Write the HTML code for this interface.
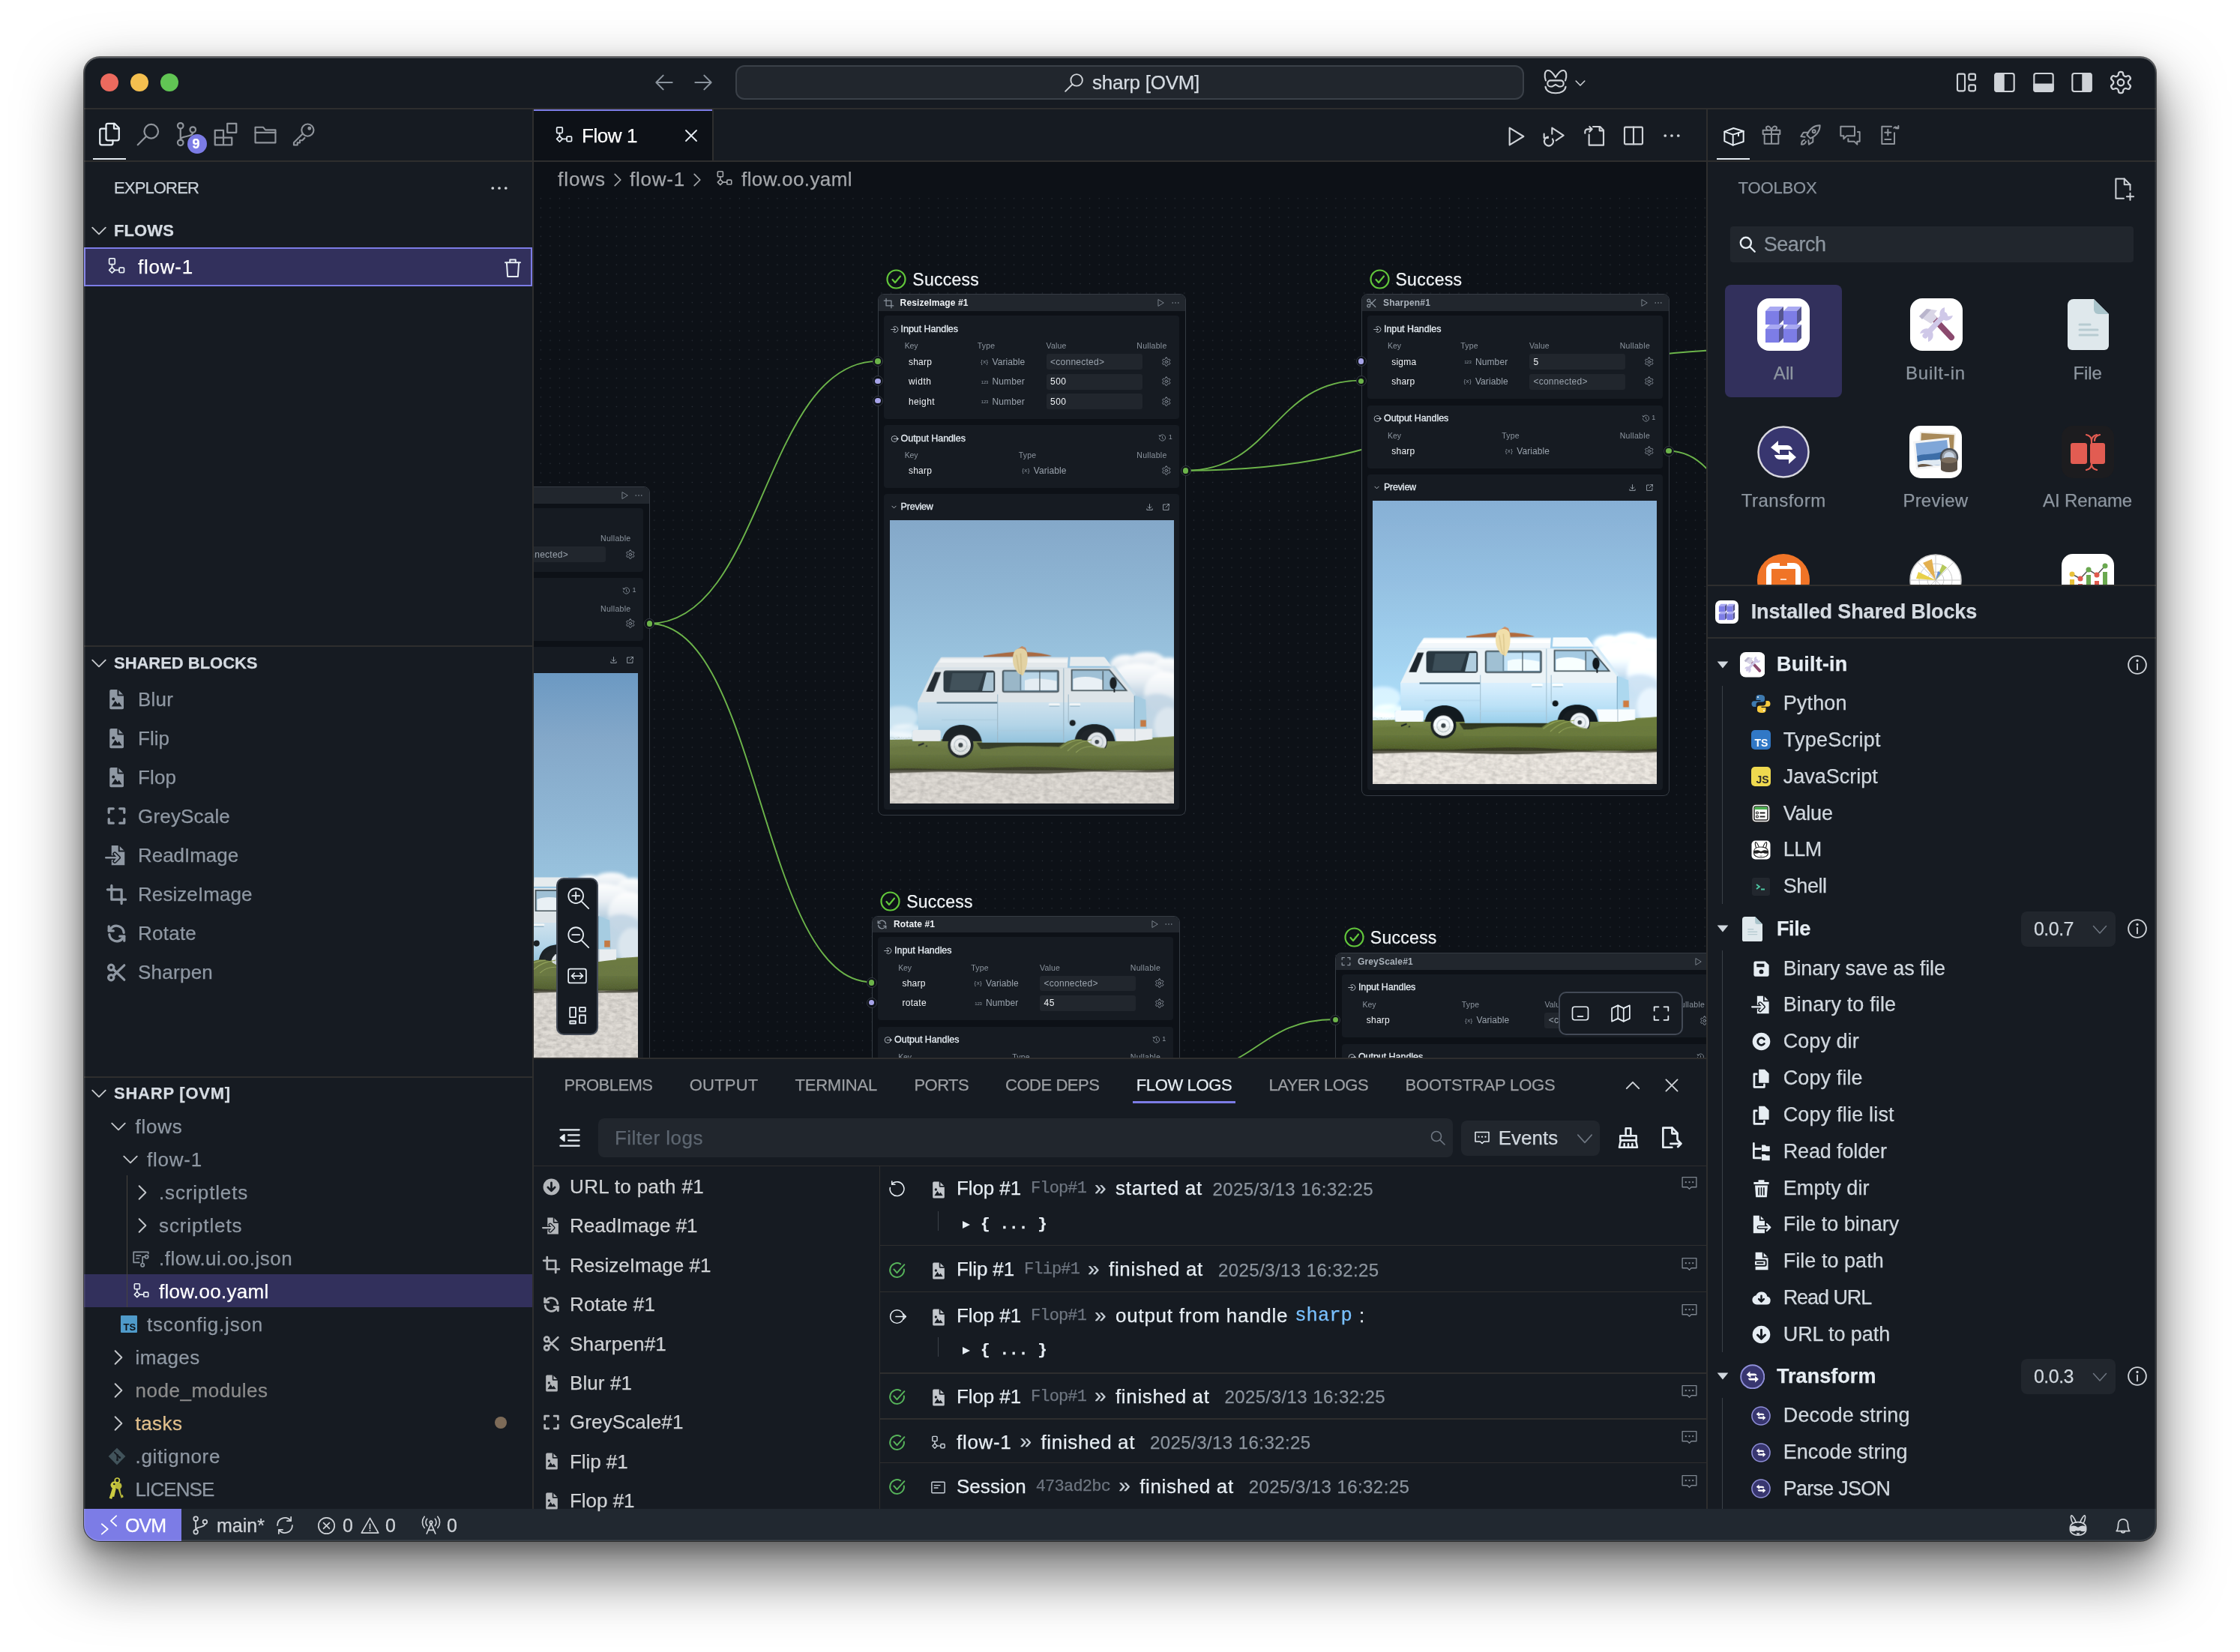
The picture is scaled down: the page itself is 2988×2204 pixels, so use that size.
<!DOCTYPE html>
<html><head><meta charset="utf-8"><title>sharp [OVM]</title>
<style>
html,body{margin:0;padding:0;background:#fff;}
body{width:2988px;height:2204px;position:relative;overflow:hidden;font-family:"Liberation Sans",sans-serif;}
div,svg{position:absolute;}
.t{white-space:nowrap;}
#win{left:112px;top:76px;width:2764px;height:1980px;border-radius:21px;background:#161b22;
box-shadow:0 0 0 1px rgba(0,0,0,.6),0 40px 80px 6px rgba(0,0,0,.54),0 10px 24px rgba(0,0,0,.25);}
#clip{left:112px;top:76px;width:2764px;height:1980px;border-radius:21px;overflow:hidden;}
#pg{left:-112px;top:-76px;width:2988px;height:2204px;will-change:transform;}
.t{-webkit-font-smoothing:antialiased;-webkit-text-stroke:0.25px currentColor;}
#rim{left:112px;top:76px;width:2764px;height:1980px;border-radius:21px;box-shadow:inset 0 0 0 1.5px rgba(255,255,255,.13),inset 0 1.5px 0 0 rgba(255,255,255,.22);pointer-events:none;}
</style></head><body>
<div id="win"></div>
<div id="clip"><div id="pg">

<div id="cv" style="left:712px;top:264px;width:1564px;height:1147px;overflow:hidden;background-color:#0d1117;background-image:radial-gradient(circle,#2d333b 0.55px,transparent 1.05px);background-size:12.64px 12.64px;background-position:-9.6px -5.5px">
<div style="left:-712px;top:-264px;width:2988px;height:2204px">
<svg style="left:0;top:0;width:0;height:0" width="0" height="0">
<symbol id="van" viewBox="0 -100 400 600" preserveAspectRatio="none">
<defs>
<linearGradient id="sky" x1="0" y1="0" x2="0" y2="1"><stop offset="0" stop-color="#6a98c2"/><stop offset=".238" stop-color="#84a8c9"/><stop offset=".5" stop-color="#8fb6d4"/><stop offset=".72" stop-color="#9ac4df"/><stop offset="1" stop-color="#aad5ec"/></linearGradient>
<linearGradient id="low" x1="0" y1="0" x2="0" y2="1"><stop offset="0" stop-color="#cfe2ee"/><stop offset=".55" stop-color="#b4d5e8"/><stop offset="1" stop-color="#93c3dd"/></linearGradient>
<linearGradient id="grs" x1="0" y1="0" x2="0" y2="1"><stop offset="0" stop-color="#7c8a50"/><stop offset=".5" stop-color="#69783f"/><stop offset=".85" stop-color="#55622f"/><stop offset="1" stop-color="#2f3520"/></linearGradient>
<linearGradient id="cld" x1="0" y1="0" x2="0" y2="1"><stop offset="0" stop-color="#ffffff"/><stop offset=".5" stop-color="#e9eff4"/><stop offset="1" stop-color="#b9cfdf"/></linearGradient>
<filter id="nz" x="0" y="0" width="100%" height="100%"><feTurbulence type="fractalNoise" baseFrequency=".12 .2" numOctaves="3" seed="3"/><feColorMatrix values="0 0 0 0 0  0 0 0 0 0  0 0 0 0 0  .9 .9 .9 0 -1.05"/></filter>
<filter id="nz2" x="0" y="0" width="100%" height="100%"><feTurbulence type="fractalNoise" baseFrequency=".5 .9" numOctaves="2" seed="8"/><feColorMatrix values="0 0 0 0 .12  0 0 0 0 .15  0 0 0 0 .08  .9 .9 .9 0 -1.1"/></filter>
<filter id="bl"><feGaussianBlur stdDeviation="2.2"/></filter>
</defs>
<rect x="0" y="-100" width="400" height="420" fill="url(#sky)"/>
<g filter="url(#bl)">
<g fill="url(#cld)">
<ellipse cx="332" cy="204" rx="22" ry="14"/><ellipse cx="362" cy="200" rx="26" ry="14"/><ellipse cx="392" cy="212" rx="24" ry="18"/>
<ellipse cx="350" cy="226" rx="42" ry="24"/><ellipse cx="388" cy="244" rx="30" ry="30"/>
</g>
<g fill="#c3d6e4"><ellipse cx="376" cy="275" rx="34" ry="30" opacity=".9"/><ellipse cx="360" cy="300" rx="50" ry="16" opacity=".8"/><ellipse cx="392" cy="290" rx="20" ry="26" fill="#dbe6ee"/></g>
<g fill="#fff"><ellipse cx="14" cy="278" rx="26" ry="16" opacity=".45"/><ellipse cx="24" cy="298" rx="28" ry="10" opacity=".6"/><ellipse cx="6" cy="306" rx="30" ry="8" opacity=".55"/></g>
</g>
<path d="M0 310c60-2 120 0 200 1s150-2 200-6v52H0z" fill="url(#grs)"/>
<rect x="0" y="306" width="400" height="48" filter="url(#nz2)" opacity=".35"/>
<rect x="0" y="353" width="400" height="150" fill="#e0dcd6"/>
<path d="M0 351c40-3 70 3 120 0s90-4 150 0 90 3 130-1v5c-50 3-90-2-140 1s-90 2-140 0-80 0-120 1z" fill="#3a3a2a" opacity=".8"/>
<rect x="0" y="356" width="400" height="150" filter="url(#nz)" opacity=".16"/>
<!-- van -->
<path d="M62 208.500l9-13.500c.700-1.200 1.500-1.500 3-1.500h177l-1 15z" fill="#e3e8eb"/>
<path d="M72 196h178l-.500 5H69z" fill="#f0f3f5"/>
<path d="M253 206l1-13h46c1.500 0 2.500.500 3.200 1.500l8.500 11.500z" fill="#e6ebee"/>
<path d="M62.300 208.500H314l30 39 .300 10H39z" fill="#dde4e8"/>
<path d="M39 257h305.300v38l25 1v16h-52c-3-16-12-26-29-26s-27 10-29.500 28.500H130c-3-17-13-27-29-27s-27 10-29 24.500H31.600v-15l8.400-1.500z" fill="url(#low)"/>
<path d="M344.300 247.500l15.800 6 2 41.500h-17.800z" fill="#a6cce1"/><path d="M312 206l4.500-.500 30 40-2.200 2.200z" fill="#c9dde9"/>
<path d="M344.300 248v47" stroke="#7fa5bb" stroke-width="1.200"/>
<rect x="31.600" y="296" width="40" height="16" rx="3.500" fill="#e6ebee"/>
<path d="M315.500 294.500h54v14a3.500 3.500 0 0 1-3.500 3.500h-47z" fill="#e9edf0"/>
<path d="M345 294.500v17.500" stroke="#9fb1bb" stroke-width="1"/>
<path d="M63.500 214.500h8.500l-10.500 27.500h-10.500z" fill="#252d33"/>
<rect x="75.500" y="212.300" width="72.500" height="30.700" rx="4" fill="#2f3c44"/><path d="M88 216h44l-8 24H84z" fill="#42525b"/><path d="M136 215h10v26h-16z" fill="#a9c3d2"/>
<rect x="159" y="212.300" width="78.300" height="30" rx="2" fill="#6f8b9c"/><path d="M161 214h22v26.500h-22z" fill="#9ab7c8"/><path d="M185 215h50v25h-50z" fill="#b9d6e8"/><path d="M190 226c10-4 26-3 45 1v13h-45z" fill="#e4edf3"/>
<rect x="159" y="212.300" width="78.300" height="30" rx="2" fill="none" stroke="#46545b" stroke-width="1.800"/><path d="M211 213v28" stroke="#46545b" stroke-width="1.200"/>
<path d="M256 211.400h53l24 29h-77z" fill="#9fc0d5"/><path d="M258 224c12-5 30-3 42 2v14h-42z" fill="#e9f0f5"/><path d="M256 211.400h53l24 29h-77z" fill="none" stroke="#46545b" stroke-width="1.800"/>
<path d="M300 213v26" stroke="#46545b" stroke-width="1.400"/>
<ellipse cx="314.500" cy="230" rx="5" ry="8.500" fill="#1b2125"/><path d="M316 238v5" stroke="#1b2125" stroke-width="2"/>
<path d="M66 257.600h86" stroke="#4f7184" stroke-width="2.200"/>
<path d="M151.700 246v68M244.700 209v105M251.300 246v40" stroke="#9db7c6" stroke-width="1.100" fill="none"/>
<path d="M73 282h78M151 297h93" stroke="#a9c9dc" stroke-width="1" fill="none"/>
<circle cx="257.200" cy="286.200" r="4.300" fill="#1b2125"/>
<rect x="352.700" y="282.200" width="8" height="9.300" fill="#c47a45"/>
<path d="M225 260h13M254 260h13" stroke="#f4f7f8" stroke-width="3" stroke-linecap="round"/><path d="M225 262.500h13M254 262.500h13" stroke="#8fb0c4" stroke-width="1.200" stroke-linecap="round"/>
<path d="M73.500 312c2-14 12-23 27.500-23s26 9 28.500 23z" fill="#1c2327"/>
<path d="M260 312c2-15 11-24 28-24s26.500 9 29 24z" fill="#1c2327"/>
<circle cx="99.600" cy="317.500" r="18" fill="#20262a"/><circle cx="99.600" cy="317.500" r="14.300" fill="#e8ecee"/><circle cx="99.600" cy="317.500" r="9" fill="none" stroke="#c3ccd1" stroke-width="1.500"/><circle cx="99.600" cy="317.500" r="3.200" fill="#3e474c"/>
<ellipse cx="286" cy="313" rx="20" ry="19" fill="#20262a"/><circle cx="291.500" cy="313" r="13.500" fill="#dfe4e7"/><circle cx="291.500" cy="313" r="8.500" fill="none" stroke="#bac4ca" stroke-width="1.500"/><circle cx="291.500" cy="313" r="3" fill="#3e474c"/>
<path d="M48 315l-8 3M52 318l-3 8" stroke="#20262a" stroke-width="2"/><path d="M122 314h146l-6 9H128z" fill="#2b3122" opacity=".85"/>
<path d="M0 322c30-5 50-3 78 1l4 8H0zM128 326c30-9 60-7 110-6 12-10 24-14 40-8 8 6 16 10 30 10 30-12 60-12 92-16v26H128z" fill="#6c7a42"/>
<path d="M240 322c10-8 20-12 30-12M250 326c12-12 22-14 34-16M262 328c10-10 22-10 36-6" stroke="#93a35c" stroke-width="1.200" fill="none"/>
<rect x="0" y="318" width="400" height="34" filter="url(#nz2)" opacity=".3"/>
<path d="M132 191.500c18-3 36-5 46-6l22 1c12 1 22 3 28 5.500l-30 .500-66 .500z" fill="#a96a42"/><path d="M178 183l8-5 5 2 2 6-8 2z" fill="#c48a62"/>
<path d="M176 184c5-5 15-4 17 3 2 11 0 22-6 33-2-3-5-2-7-5-5-6-7-12-7-19 0-5 1-9 3-12z" fill="#e2d2a3"/><path d="M178 190c2 8 2 18 5 26M184 188c1 9 1 20 1 30" stroke="#c9b57e" stroke-width="1" fill="none"/>
</symbol></svg>
<svg style="left:0;top:0" width="2988" height="2204" viewBox="0 0 2988 2204" fill="none" stroke="#6cb44a" stroke-width="1.900"><path d="M866 832C1018.5 832 1018.5 481.9 1171 481.9"/><path d="M866 832C1014.5 832 1014.5 1310.3 1163 1310.3"/><path d="M1581.5 627.8C1698.5 627.8 1698.5 507.6 1815.5 507.6"/><path d="M1581.5 627.8C1960.8 627.8 1960.8 466 2340 466"/><path d="M2226 601.7C2313.0 601.7 2313.0 760 2400 760"/><path d="M1574 1430.5C1677.7 1430.5 1677.7 1360 1781.4 1360"/></svg>
<div style="left:455.9px;top:649.2px;width:411px;height:825.2000000000003px;background:#0d1117;border:1px solid #353b43;border-radius:8px;box-sizing:border-box;"></div>
<div style="left:456.9px;top:650.2px;width:409px;height:21.5px;background:#21262d;border-radius:7px 7px 0 0;"></div>
<div class="t" style="top:653.0px;height:16px;line-height:16px;font-size:12px;color:#f0f3f6;letter-spacing:-0.06px;left:485.4px;font-weight:700;-webkit-text-stroke:0;">ReadImage #1</div>
<svg style="left:826.9px;top:655.0px;color:#8b949e;" width="12" height="12" viewBox="0 0 24 24" fill="none" stroke="#8b949e" stroke-width="1.6" stroke-linecap="round" stroke-linejoin="round"><path d="M6.500 3.500l14 8.500-14 8.500z"/></svg>
<svg style="left:846.4px;top:655.0px;color:#8b949e;" width="12" height="12" viewBox="0 0 24 24" fill="#8b949e" stroke="none" stroke-linecap="round" stroke-linejoin="round"><circle cx="4.500" cy="12" r="1.600"/><circle cx="12" cy="12" r="1.600"/><circle cx="19.500" cy="12" r="1.600"/></svg>
<div style="left:464.2px;top:677.9000000000001px;width:394px;height:84.80000000000007px;background:#161b22;border-radius:4px;"></div>
<svg style="left:472.4px;top:690.5px;color:#c9d1d9;" width="11" height="11" viewBox="0 0 24 24" fill="none" stroke="#c9d1d9" stroke-width="1.8" stroke-linecap="round" stroke-linejoin="round"><path d="M8 5.200A8.500 8.500 0 1 1 8 18.800"/><path d="M1.500 12H14M10.500 8.500L14 12l-3.500 3.500"/></svg>
<div class="t" style="top:687.5px;height:17px;line-height:17px;font-size:12.5px;color:#e6edf3;letter-spacing:-0.06px;left:486.4px;font-weight:500;-webkit-text-stroke:0;-webkit-text-stroke:0.3px currentColor;">Input Handles</div>
<div class="t" style="top:711.3px;height:14px;line-height:14px;font-size:10.5px;color:#8b949e;letter-spacing:-0.13px;left:491.5px;-webkit-text-stroke:0;">Key</div>
<div class="t" style="top:711.3px;height:14px;line-height:14px;font-size:10.5px;color:#8b949e;letter-spacing:0.18px;left:588.6px;-webkit-text-stroke:0;">Type</div>
<div class="t" style="top:711.3px;height:14px;line-height:14px;font-size:10.5px;color:#8b949e;letter-spacing:0.14px;left:680.4px;-webkit-text-stroke:0;">Value</div>
<div class="t" style="top:711.3px;height:14px;line-height:14px;font-size:10.5px;color:#8b949e;letter-spacing:0.30px;left:801.1px;-webkit-text-stroke:0;">Nullable</div>
<div class="t" style="top:731.6px;height:16px;line-height:16px;font-size:12px;color:#f0f3f6;letter-spacing:0.24px;left:496.7px;-webkit-text-stroke:0;">sharp</div>
<div class="t" style="top:733.8px;height:11px;line-height:11px;font-size:8px;color:#8b949e;letter-spacing:0.39px;left:592.9px;-webkit-text-stroke:0;">{x}</div>
<div class="t" style="top:731.6px;height:16px;line-height:16px;font-size:12px;color:#9aa3ad;letter-spacing:0.08px;left:608.3px;-webkit-text-stroke:0;">Variable</div>
<div style="left:680.4px;top:729.2000000000002px;width:128.10000000000002px;height:20.9px;background:#21262d;border-radius:3px;"></div>
<div class="t" style="top:731.6px;height:16px;line-height:16px;font-size:12px;color:#9aa3ad;letter-spacing:0.26px;left:685.8px;-webkit-text-stroke:0;">&lt;connected&gt;</div>
<svg style="left:833.6px;top:732.9px;color:#9aa3ad;" width="13.5" height="13.5" viewBox="0 0 24 24" fill="none" stroke="#9aa3ad" stroke-width="1.5" stroke-linecap="round" stroke-linejoin="round"><path d="M12.22 2h-.44a2 2 0 0 0-2 2v.18a2 2 0 0 1-1 1.73l-.43.25a2 2 0 0 1-2 0l-.15-.08a2 2 0 0 0-2.73.73l-.22.38a2 2 0 0 0 .73 2.73l.15.1a2 2 0 0 1 1 1.72v.51a2 2 0 0 1-1 1.74l-.15.09a2 2 0 0 0-.73 2.73l.22.38a2 2 0 0 0 2.73.73l.15-.08a2 2 0 0 1 2 0l.43.25a2 2 0 0 1 1 1.73V20a2 2 0 0 0 2 2h.44a2 2 0 0 0 2-2v-.18a2 2 0 0 1 1-1.73l.43-.25a2 2 0 0 1 2 0l.15.08a2 2 0 0 0 2.73-.73l.22-.39a2 2 0 0 0-.73-2.73l-.15-.08a2 2 0 0 1-1-1.74v-.5a2 2 0 0 1 1-1.74l.15-.09a2 2 0 0 0 .73-2.73l-.22-.38a2 2 0 0 0-2.73-.73l-.15.08a2 2 0 0 1-2 0l-.43-.25a2 2 0 0 1-1-1.73V4a2 2 0 0 0-2-2z"/><circle cx="12" cy="12" r="3"/></svg>
<div style="left:464.2px;top:771.1000000000001px;width:394px;height:84.0px;background:#161b22;border-radius:4px;"></div>
<svg style="left:472.4px;top:783.6px;color:#c9d1d9;" width="11" height="11" viewBox="0 0 24 24" fill="none" stroke="#c9d1d9" stroke-width="1.8" stroke-linecap="round" stroke-linejoin="round"><circle cx="11" cy="12" r="8.500"/><path d="M9.500 12H22.500M19 8.500l3.500 3.500-3.500 3.500"/></svg>
<div class="t" style="top:780.6px;height:17px;line-height:17px;font-size:12.5px;color:#e6edf3;letter-spacing:-0.04px;left:486.4px;font-weight:500;-webkit-text-stroke:0;-webkit-text-stroke:0.3px currentColor;">Output Handles</div>
<svg style="left:829.9px;top:783.1px;color:#8b949e;" width="11" height="11" viewBox="0 0 24 24" fill="none" stroke="#8b949e" stroke-width="1.8" stroke-linecap="round" stroke-linejoin="round"><path d="M4.500 6A9 9 0 1 1 3 12"/><path d="M2.500 3.500l1.500 3.500 3.500-1"/><path d="M12 7.500v5l3 2.500"/></svg>
<div class="t" style="top:781.1px;height:12px;line-height:12px;font-size:9px;color:#8b949e;letter-spacing:0.30px;left:843.6px;-webkit-text-stroke:0;">1</div>
<div class="t" style="top:804.5px;height:14px;line-height:14px;font-size:10.5px;color:#8b949e;letter-spacing:-0.13px;left:491.5px;-webkit-text-stroke:0;">Key</div>
<div class="t" style="top:804.5px;height:14px;line-height:14px;font-size:10.5px;color:#8b949e;letter-spacing:0.18px;left:643.6px;-webkit-text-stroke:0;">Type</div>
<div class="t" style="top:804.5px;height:14px;line-height:14px;font-size:10.5px;color:#8b949e;letter-spacing:0.30px;left:801.1px;-webkit-text-stroke:0;">Nullable</div>
<div class="t" style="top:824.0px;height:16px;line-height:16px;font-size:12px;color:#f0f3f6;letter-spacing:0.24px;left:496.7px;-webkit-text-stroke:0;">sharp</div>
<div class="t" style="top:826.2px;height:11px;line-height:11px;font-size:8px;color:#8b949e;letter-spacing:0.39px;left:648.1px;-webkit-text-stroke:0;">{x}</div>
<div class="t" style="top:824.0px;height:16px;line-height:16px;font-size:12px;color:#9aa3ad;letter-spacing:0.08px;left:663.6px;-webkit-text-stroke:0;">Variable</div>
<svg style="left:833.6px;top:825.3px;color:#9aa3ad;" width="13.5" height="13.5" viewBox="0 0 24 24" fill="none" stroke="#9aa3ad" stroke-width="1.5" stroke-linecap="round" stroke-linejoin="round"><path d="M12.22 2h-.44a2 2 0 0 0-2 2v.18a2 2 0 0 1-1 1.73l-.43.25a2 2 0 0 1-2 0l-.15-.08a2 2 0 0 0-2.73.73l-.22.38a2 2 0 0 0 .73 2.73l.15.1a2 2 0 0 1 1 1.72v.51a2 2 0 0 1-1 1.74l-.15.09a2 2 0 0 0-.73 2.73l.22.38a2 2 0 0 0 2.73.73l.15-.08a2 2 0 0 1 2 0l.43.25a2 2 0 0 1 1 1.73V20a2 2 0 0 0 2 2h.44a2 2 0 0 0 2-2v-.18a2 2 0 0 1 1-1.73l.43-.25a2 2 0 0 1 2 0l.15.08a2 2 0 0 0 2.73-.73l.22-.39a2 2 0 0 0-.73-2.73l-.15-.08a2 2 0 0 1-1-1.74v-.5a2 2 0 0 1 1-1.74l.15-.09a2 2 0 0 0 .73-2.73l-.22-.38a2 2 0 0 0-2.73-.73l-.15.08a2 2 0 0 1-2 0l-.43-.25a2 2 0 0 1-1-1.73V4a2 2 0 0 0-2-2z"/><circle cx="12" cy="12" r="3"/></svg>
<div style="left:464.2px;top:863.3000000000002px;width:394px;height:602.9000000000001px;background:#161b22;border-radius:4px;"></div>
<svg style="left:472.8px;top:876.3px;color:#c9d1d9;" width="9" height="9" viewBox="0 0 24 24" fill="none" stroke="#c9d1d9" stroke-width="2.2" stroke-linecap="round" stroke-linejoin="round"><path d="M5 8.5l7 7 7-7"/></svg>
<div class="t" style="top:872.3px;height:17px;line-height:17px;font-size:12.5px;color:#e6edf3;letter-spacing:-0.22px;left:486.4px;font-weight:500;-webkit-text-stroke:0;-webkit-text-stroke:0.3px currentColor;">Preview</div>
<svg style="left:812.7px;top:875.3px;color:#9aa3ad;" width="11" height="11" viewBox="0 0 24 24" fill="none" stroke="#9aa3ad" stroke-width="2" stroke-linecap="round" stroke-linejoin="round"><path d="M12 3.500v12M7 11l5 5 5-5M4 17v3.500h16V17"/></svg>
<svg style="left:834.9px;top:875.3px;color:#9aa3ad;" width="11" height="11" viewBox="0 0 24 24" fill="none" stroke="#9aa3ad" stroke-width="2" stroke-linecap="round" stroke-linejoin="round"><path d="M19.500 13v7.500h-16v-16H11"/><path d="M14.500 3.500h6v6M20.500 3.500L11 13"/></svg>
<svg style="left:471.79999999999995px;top:898.2000000000002px;" width="379" height="560" viewBox="0 -95 400 592" preserveAspectRatio="none"><use href="#van" x="0" y="-100" width="400" height="600"/></svg>
<div style="left:448.9px;top:731.8000000000002px;width:14px;height:14px;background:#0d1117;border-radius:50%;border:1px solid #353b43;box-sizing:border-box;"></div>
<div style="left:452.09999999999997px;top:735.0000000000002px;width:7.6px;height:7.6px;background:#6cb44a;border-radius:50%;"></div>
<div style="left:859.4px;top:825.0000000000001px;width:14px;height:14px;background:#0d1117;border-radius:50%;border:1px solid #353b43;box-sizing:border-box;"></div>
<div style="left:862.6px;top:828.2000000000002px;width:7.6px;height:7.6px;background:#6cb44a;border-radius:50%;"></div>
<svg style="left:1182.3px;top:358.8px" width="27" height="27" viewBox="0 0 27 27" fill="none" stroke="#62c73b" stroke-width="2.200" stroke-linecap="round" stroke-linejoin="round"><circle cx="13.500" cy="13.500" r="12"/><path d="M8.500 14l3.500 4 7-8.500"/></svg>
<div class="t" style="top:356.8px;height:32px;line-height:32px;font-size:23px;color:#f0f3f6;letter-spacing:0.25px;left:1217.3px;">Success</div>
<div style="left:1171.1px;top:392.3px;width:411px;height:696.0px;background:#0d1117;border:1px solid #353b43;border-radius:8px;box-sizing:border-box;"></div>
<div style="left:1172.1px;top:393.3px;width:409px;height:21.5px;background:#21262d;border-radius:7px 7px 0 0;"></div>
<svg style="left:1177.6px;top:396.6px;color:#8b949e;" width="15" height="15" viewBox="0 0 24 24" fill="none" stroke="#8b949e" stroke-width="2" stroke-linecap="round" stroke-linejoin="round"><path d="M6.500 2v15.500H22M2 6.500h15.500V22"/></svg>
<div class="t" style="top:396.1px;height:16px;line-height:16px;font-size:12px;color:#f0f3f6;letter-spacing:0.12px;left:1200.6px;font-weight:700;-webkit-text-stroke:0;">ResizeImage #1</div>
<svg style="left:1542.1px;top:398.1px;color:#8b949e;" width="12" height="12" viewBox="0 0 24 24" fill="none" stroke="#8b949e" stroke-width="1.6" stroke-linecap="round" stroke-linejoin="round"><path d="M6.500 3.500l14 8.500-14 8.500z"/></svg>
<svg style="left:1561.6px;top:398.1px;color:#8b949e;" width="12" height="12" viewBox="0 0 24 24" fill="#8b949e" stroke="none" stroke-linecap="round" stroke-linejoin="round"><circle cx="4.500" cy="12" r="1.600"/><circle cx="12" cy="12" r="1.600"/><circle cx="19.500" cy="12" r="1.600"/></svg>
<div style="left:1179.3999999999999px;top:421.0px;width:394px;height:137.60000000000002px;background:#161b22;border-radius:4px;"></div>
<svg style="left:1187.6px;top:433.6px;color:#c9d1d9;" width="11" height="11" viewBox="0 0 24 24" fill="none" stroke="#c9d1d9" stroke-width="1.8" stroke-linecap="round" stroke-linejoin="round"><path d="M8 5.200A8.500 8.500 0 1 1 8 18.800"/><path d="M1.500 12H14M10.500 8.500L14 12l-3.500 3.500"/></svg>
<div class="t" style="top:430.6px;height:17px;line-height:17px;font-size:12.5px;color:#e6edf3;letter-spacing:-0.06px;left:1201.6px;font-weight:500;-webkit-text-stroke:0;-webkit-text-stroke:0.3px currentColor;">Input Handles</div>
<div class="t" style="top:454.4px;height:14px;line-height:14px;font-size:10.5px;color:#8b949e;letter-spacing:-0.13px;left:1206.7px;-webkit-text-stroke:0;">Key</div>
<div class="t" style="top:454.4px;height:14px;line-height:14px;font-size:10.5px;color:#8b949e;letter-spacing:0.18px;left:1303.8px;-webkit-text-stroke:0;">Type</div>
<div class="t" style="top:454.4px;height:14px;line-height:14px;font-size:10.5px;color:#8b949e;letter-spacing:0.14px;left:1395.6px;-webkit-text-stroke:0;">Value</div>
<div class="t" style="top:454.4px;height:14px;line-height:14px;font-size:10.5px;color:#8b949e;letter-spacing:0.30px;left:1516.3px;-webkit-text-stroke:0;">Nullable</div>
<div class="t" style="top:474.7px;height:16px;line-height:16px;font-size:12px;color:#f0f3f6;letter-spacing:0.24px;left:1211.9px;-webkit-text-stroke:0;">sharp</div>
<div class="t" style="top:476.9px;height:11px;line-height:11px;font-size:8px;color:#8b949e;letter-spacing:0.39px;left:1308.1px;-webkit-text-stroke:0;">{x}</div>
<div class="t" style="top:474.7px;height:16px;line-height:16px;font-size:12px;color:#9aa3ad;letter-spacing:0.08px;left:1323.5px;-webkit-text-stroke:0;">Variable</div>
<div style="left:1395.6px;top:472.3px;width:128.10000000000002px;height:20.9px;background:#21262d;border-radius:3px;"></div>
<div class="t" style="top:474.7px;height:16px;line-height:16px;font-size:12px;color:#9aa3ad;letter-spacing:0.26px;left:1401.0px;-webkit-text-stroke:0;">&lt;connected&gt;</div>
<svg style="left:1548.8px;top:475.9px;color:#9aa3ad;" width="13.5" height="13.5" viewBox="0 0 24 24" fill="none" stroke="#9aa3ad" stroke-width="1.5" stroke-linecap="round" stroke-linejoin="round"><path d="M12.22 2h-.44a2 2 0 0 0-2 2v.18a2 2 0 0 1-1 1.73l-.43.25a2 2 0 0 1-2 0l-.15-.08a2 2 0 0 0-2.73.73l-.22.38a2 2 0 0 0 .73 2.73l.15.1a2 2 0 0 1 1 1.72v.51a2 2 0 0 1-1 1.74l-.15.09a2 2 0 0 0-.73 2.73l.22.38a2 2 0 0 0 2.73.73l.15-.08a2 2 0 0 1 2 0l.43.25a2 2 0 0 1 1 1.73V20a2 2 0 0 0 2 2h.44a2 2 0 0 0 2-2v-.18a2 2 0 0 1 1-1.73l.43-.25a2 2 0 0 1 2 0l.15.08a2 2 0 0 0 2.73-.73l.22-.39a2 2 0 0 0-.73-2.73l-.15-.08a2 2 0 0 1-1-1.74v-.5a2 2 0 0 1 1-1.74l.15-.09a2 2 0 0 0 .73-2.73l-.22-.38a2 2 0 0 0-2.73-.73l-.15.08a2 2 0 0 1-2 0l-.43-.25a2 2 0 0 1-1-1.73V4a2 2 0 0 0-2-2z"/><circle cx="12" cy="12" r="3"/></svg>
<div class="t" style="top:501.1px;height:16px;line-height:16px;font-size:12px;color:#f0f3f6;letter-spacing:0.50px;left:1211.9px;-webkit-text-stroke:0;">width</div>
<div class="t" style="top:505.6px;height:8px;line-height:8px;font-size:6px;color:#8b949e;letter-spacing:-0.18px;left:1308.8px;-webkit-text-stroke:0;">123</div>
<div class="t" style="top:501.1px;height:16px;line-height:16px;font-size:12px;color:#9aa3ad;letter-spacing:0.12px;left:1323.5px;-webkit-text-stroke:0;">Number</div>
<div style="left:1395.6px;top:498.7px;width:128.10000000000002px;height:20.9px;background:#21262d;border-radius:3px;"></div>
<div class="t" style="top:501.1px;height:16px;line-height:16px;font-size:12px;color:#f0f3f6;letter-spacing:0.46px;left:1401.0px;-webkit-text-stroke:0;">500</div>
<svg style="left:1548.8px;top:502.3px;color:#9aa3ad;" width="13.5" height="13.5" viewBox="0 0 24 24" fill="none" stroke="#9aa3ad" stroke-width="1.5" stroke-linecap="round" stroke-linejoin="round"><path d="M12.22 2h-.44a2 2 0 0 0-2 2v.18a2 2 0 0 1-1 1.73l-.43.25a2 2 0 0 1-2 0l-.15-.08a2 2 0 0 0-2.73.73l-.22.38a2 2 0 0 0 .73 2.73l.15.1a2 2 0 0 1 1 1.72v.51a2 2 0 0 1-1 1.74l-.15.09a2 2 0 0 0-.73 2.73l.22.38a2 2 0 0 0 2.73.73l.15-.08a2 2 0 0 1 2 0l.43.25a2 2 0 0 1 1 1.73V20a2 2 0 0 0 2 2h.44a2 2 0 0 0 2-2v-.18a2 2 0 0 1 1-1.73l.43-.25a2 2 0 0 1 2 0l.15.08a2 2 0 0 0 2.73-.73l.22-.39a2 2 0 0 0-.73-2.73l-.15-.08a2 2 0 0 1-1-1.74v-.5a2 2 0 0 1 1-1.74l.15-.09a2 2 0 0 0 .73-2.73l-.22-.38a2 2 0 0 0-2.73-.73l-.15.08a2 2 0 0 1-2 0l-.43-.25a2 2 0 0 1-1-1.73V4a2 2 0 0 0-2-2z"/><circle cx="12" cy="12" r="3"/></svg>
<div class="t" style="top:527.5px;height:16px;line-height:16px;font-size:12px;color:#f0f3f6;letter-spacing:0.39px;left:1211.9px;-webkit-text-stroke:0;">height</div>
<div class="t" style="top:532.0px;height:8px;line-height:8px;font-size:6px;color:#8b949e;letter-spacing:-0.18px;left:1308.8px;-webkit-text-stroke:0;">123</div>
<div class="t" style="top:527.5px;height:16px;line-height:16px;font-size:12px;color:#9aa3ad;letter-spacing:0.12px;left:1323.5px;-webkit-text-stroke:0;">Number</div>
<div style="left:1395.6px;top:525.1px;width:128.10000000000002px;height:20.9px;background:#21262d;border-radius:3px;"></div>
<div class="t" style="top:527.5px;height:16px;line-height:16px;font-size:12px;color:#f0f3f6;letter-spacing:0.46px;left:1401.0px;-webkit-text-stroke:0;">500</div>
<svg style="left:1548.8px;top:528.8px;color:#9aa3ad;" width="13.5" height="13.5" viewBox="0 0 24 24" fill="none" stroke="#9aa3ad" stroke-width="1.5" stroke-linecap="round" stroke-linejoin="round"><path d="M12.22 2h-.44a2 2 0 0 0-2 2v.18a2 2 0 0 1-1 1.73l-.43.25a2 2 0 0 1-2 0l-.15-.08a2 2 0 0 0-2.73.73l-.22.38a2 2 0 0 0 .73 2.73l.15.1a2 2 0 0 1 1 1.72v.51a2 2 0 0 1-1 1.74l-.15.09a2 2 0 0 0-.73 2.73l.22.38a2 2 0 0 0 2.73.73l.15-.08a2 2 0 0 1 2 0l.43.25a2 2 0 0 1 1 1.73V20a2 2 0 0 0 2 2h.44a2 2 0 0 0 2-2v-.18a2 2 0 0 1 1-1.73l.43-.25a2 2 0 0 1 2 0l.15.08a2 2 0 0 0 2.73-.73l.22-.39a2 2 0 0 0-.73-2.73l-.15-.08a2 2 0 0 1-1-1.74v-.5a2 2 0 0 1 1-1.74l.15-.09a2 2 0 0 0 .73-2.73l-.22-.38a2 2 0 0 0-2.73-.73l-.15.08a2 2 0 0 1-2 0l-.43-.25a2 2 0 0 1-1-1.73V4a2 2 0 0 0-2-2z"/><circle cx="12" cy="12" r="3"/></svg>
<div style="left:1179.3999999999999px;top:567.0px;width:394px;height:84.0px;background:#161b22;border-radius:4px;"></div>
<svg style="left:1187.6px;top:579.5px;color:#c9d1d9;" width="11" height="11" viewBox="0 0 24 24" fill="none" stroke="#c9d1d9" stroke-width="1.8" stroke-linecap="round" stroke-linejoin="round"><circle cx="11" cy="12" r="8.500"/><path d="M9.500 12H22.500M19 8.500l3.500 3.500-3.500 3.500"/></svg>
<div class="t" style="top:576.5px;height:17px;line-height:17px;font-size:12.5px;color:#e6edf3;letter-spacing:-0.04px;left:1201.6px;font-weight:500;-webkit-text-stroke:0;-webkit-text-stroke:0.3px currentColor;">Output Handles</div>
<svg style="left:1545.1px;top:579.0px;color:#8b949e;" width="11" height="11" viewBox="0 0 24 24" fill="none" stroke="#8b949e" stroke-width="1.8" stroke-linecap="round" stroke-linejoin="round"><path d="M4.500 6A9 9 0 1 1 3 12"/><path d="M2.500 3.500l1.500 3.500 3.500-1"/><path d="M12 7.500v5l3 2.500"/></svg>
<div class="t" style="top:577.0px;height:12px;line-height:12px;font-size:9px;color:#8b949e;letter-spacing:0.30px;left:1558.8px;-webkit-text-stroke:0;">1</div>
<div class="t" style="top:600.4px;height:14px;line-height:14px;font-size:10.5px;color:#8b949e;letter-spacing:-0.13px;left:1206.7px;-webkit-text-stroke:0;">Key</div>
<div class="t" style="top:600.4px;height:14px;line-height:14px;font-size:10.5px;color:#8b949e;letter-spacing:0.18px;left:1358.8px;-webkit-text-stroke:0;">Type</div>
<div class="t" style="top:600.4px;height:14px;line-height:14px;font-size:10.5px;color:#8b949e;letter-spacing:0.30px;left:1516.3px;-webkit-text-stroke:0;">Nullable</div>
<div class="t" style="top:619.9px;height:16px;line-height:16px;font-size:12px;color:#f0f3f6;letter-spacing:0.24px;left:1211.9px;-webkit-text-stroke:0;">sharp</div>
<div class="t" style="top:622.1px;height:11px;line-height:11px;font-size:8px;color:#8b949e;letter-spacing:0.39px;left:1363.3px;-webkit-text-stroke:0;">{x}</div>
<div class="t" style="top:619.9px;height:16px;line-height:16px;font-size:12px;color:#9aa3ad;letter-spacing:0.08px;left:1378.8px;-webkit-text-stroke:0;">Variable</div>
<svg style="left:1548.8px;top:621.1px;color:#9aa3ad;" width="13.5" height="13.5" viewBox="0 0 24 24" fill="none" stroke="#9aa3ad" stroke-width="1.5" stroke-linecap="round" stroke-linejoin="round"><path d="M12.22 2h-.44a2 2 0 0 0-2 2v.18a2 2 0 0 1-1 1.73l-.43.25a2 2 0 0 1-2 0l-.15-.08a2 2 0 0 0-2.73.73l-.22.38a2 2 0 0 0 .73 2.73l.15.1a2 2 0 0 1 1 1.72v.51a2 2 0 0 1-1 1.74l-.15.09a2 2 0 0 0-.73 2.73l.22.38a2 2 0 0 0 2.73.73l.15-.08a2 2 0 0 1 2 0l.43.25a2 2 0 0 1 1 1.73V20a2 2 0 0 0 2 2h.44a2 2 0 0 0 2-2v-.18a2 2 0 0 1 1-1.73l.43-.25a2 2 0 0 1 2 0l.15.08a2 2 0 0 0 2.73-.73l.22-.39a2 2 0 0 0-.73-2.73l-.15-.08a2 2 0 0 1-1-1.74v-.5a2 2 0 0 1 1-1.74l.15-.09a2 2 0 0 0 .73-2.73l-.22-.38a2 2 0 0 0-2.73-.73l-.15.08a2 2 0 0 1-2 0l-.43-.25a2 2 0 0 1-1-1.73V4a2 2 0 0 0-2-2z"/><circle cx="12" cy="12" r="3"/></svg>
<div style="left:1179.3999999999999px;top:659.2px;width:394px;height:420.89999999999986px;background:#161b22;border-radius:4px;"></div>
<svg style="left:1188.0px;top:672.2px;color:#c9d1d9;" width="9" height="9" viewBox="0 0 24 24" fill="none" stroke="#c9d1d9" stroke-width="2.2" stroke-linecap="round" stroke-linejoin="round"><path d="M5 8.5l7 7 7-7"/></svg>
<div class="t" style="top:668.2px;height:17px;line-height:17px;font-size:12.5px;color:#e6edf3;letter-spacing:-0.22px;left:1201.6px;font-weight:500;-webkit-text-stroke:0;-webkit-text-stroke:0.3px currentColor;">Preview</div>
<svg style="left:1527.9px;top:671.2px;color:#9aa3ad;" width="11" height="11" viewBox="0 0 24 24" fill="none" stroke="#9aa3ad" stroke-width="2" stroke-linecap="round" stroke-linejoin="round"><path d="M12 3.500v12M7 11l5 5 5-5M4 17v3.500h16V17"/></svg>
<svg style="left:1550.1px;top:671.2px;color:#9aa3ad;" width="11" height="11" viewBox="0 0 24 24" fill="none" stroke="#9aa3ad" stroke-width="2" stroke-linecap="round" stroke-linejoin="round"><path d="M19.500 13v7.500h-16v-16H11"/><path d="M14.500 3.500h6v6M20.500 3.500L11 13"/></svg>
<svg style="left:1187.0px;top:694.1px;" width="379" height="378" viewBox="0 0 400 400" preserveAspectRatio="none"><use href="#van" x="0" y="-100" width="400" height="600"/></svg>
<div style="left:1164.1px;top:474.9px;width:14px;height:14px;background:#0d1117;border-radius:50%;border:1px solid #353b43;box-sizing:border-box;"></div>
<div style="left:1167.3px;top:478.09999999999997px;width:7.6px;height:7.6px;background:#6cb44a;border-radius:50%;"></div>
<div style="left:1164.1px;top:501.29999999999995px;width:14px;height:14px;background:#0d1117;border-radius:50%;border:1px solid #353b43;box-sizing:border-box;"></div>
<div style="left:1167.3px;top:504.49999999999994px;width:7.6px;height:7.6px;background:#a6a3e8;border-radius:50%;"></div>
<div style="left:1164.1px;top:527.7px;width:14px;height:14px;background:#0d1117;border-radius:50%;border:1px solid #353b43;box-sizing:border-box;"></div>
<div style="left:1167.3px;top:530.9000000000001px;width:7.6px;height:7.6px;background:#a6a3e8;border-radius:50%;"></div>
<div style="left:1574.6px;top:620.9px;width:14px;height:14px;background:#0d1117;border-radius:50%;border:1px solid #353b43;box-sizing:border-box;"></div>
<div style="left:1577.8px;top:624.1px;width:7.6px;height:7.6px;background:#6cb44a;border-radius:50%;"></div>
<svg style="left:1826.5px;top:358.8px" width="27" height="27" viewBox="0 0 27 27" fill="none" stroke="#62c73b" stroke-width="2.200" stroke-linecap="round" stroke-linejoin="round"><circle cx="13.500" cy="13.500" r="12"/><path d="M8.500 14l3.500 4 7-8.500"/></svg>
<div class="t" style="top:356.8px;height:32px;line-height:32px;font-size:23px;color:#f0f3f6;letter-spacing:0.25px;left:1861.5px;">Success</div>
<div style="left:1815.5px;top:392.3px;width:411px;height:669.5999999999999px;background:#0d1117;border:1px solid #353b43;border-radius:8px;box-sizing:border-box;"></div>
<div style="left:1816.5px;top:393.3px;width:409px;height:21.5px;background:#21262d;border-radius:7px 7px 0 0;"></div>
<svg style="left:1822.0px;top:396.6px;color:#8b949e;" width="15" height="15" viewBox="0 0 24 24" fill="none" stroke="#8b949e" stroke-width="2" stroke-linecap="round" stroke-linejoin="round"><circle cx="6" cy="6.500" r="3"/><circle cx="6" cy="17.500" r="3"/><path d="M8.500 8.500L20.500 20M8.500 15.500L20.500 4"/></svg>
<div class="t" style="top:396.1px;height:16px;line-height:16px;font-size:12px;color:#aab2bb;letter-spacing:0.18px;left:1845.0px;font-weight:700;-webkit-text-stroke:0;">Sharpen#1</div>
<svg style="left:2186.5px;top:398.1px;color:#8b949e;" width="12" height="12" viewBox="0 0 24 24" fill="none" stroke="#8b949e" stroke-width="1.6" stroke-linecap="round" stroke-linejoin="round"><path d="M6.500 3.500l14 8.500-14 8.500z"/></svg>
<svg style="left:2206.0px;top:398.1px;color:#8b949e;" width="12" height="12" viewBox="0 0 24 24" fill="#8b949e" stroke="none" stroke-linecap="round" stroke-linejoin="round"><circle cx="4.500" cy="12" r="1.600"/><circle cx="12" cy="12" r="1.600"/><circle cx="19.500" cy="12" r="1.600"/></svg>
<div style="left:1823.8px;top:421.0px;width:394px;height:111.19999999999993px;background:#161b22;border-radius:4px;"></div>
<svg style="left:1832.0px;top:433.6px;color:#c9d1d9;" width="11" height="11" viewBox="0 0 24 24" fill="none" stroke="#c9d1d9" stroke-width="1.8" stroke-linecap="round" stroke-linejoin="round"><path d="M8 5.200A8.500 8.500 0 1 1 8 18.800"/><path d="M1.500 12H14M10.500 8.500L14 12l-3.500 3.500"/></svg>
<div class="t" style="top:430.6px;height:17px;line-height:17px;font-size:12.5px;color:#e6edf3;letter-spacing:-0.06px;left:1846.0px;font-weight:500;-webkit-text-stroke:0;-webkit-text-stroke:0.3px currentColor;">Input Handles</div>
<div class="t" style="top:454.4px;height:14px;line-height:14px;font-size:10.5px;color:#8b949e;letter-spacing:-0.13px;left:1851.1px;-webkit-text-stroke:0;">Key</div>
<div class="t" style="top:454.4px;height:14px;line-height:14px;font-size:10.5px;color:#8b949e;letter-spacing:0.18px;left:1948.2px;-webkit-text-stroke:0;">Type</div>
<div class="t" style="top:454.4px;height:14px;line-height:14px;font-size:10.5px;color:#8b949e;letter-spacing:0.14px;left:2040.0px;-webkit-text-stroke:0;">Value</div>
<div class="t" style="top:454.4px;height:14px;line-height:14px;font-size:10.5px;color:#8b949e;letter-spacing:0.30px;left:2160.7px;-webkit-text-stroke:0;">Nullable</div>
<div class="t" style="top:474.7px;height:16px;line-height:16px;font-size:12px;color:#f0f3f6;letter-spacing:0.20px;left:1856.3px;-webkit-text-stroke:0;">sigma</div>
<div class="t" style="top:479.2px;height:8px;line-height:8px;font-size:6px;color:#8b949e;letter-spacing:-0.18px;left:1953.2px;-webkit-text-stroke:0;">123</div>
<div class="t" style="top:474.7px;height:16px;line-height:16px;font-size:12px;color:#9aa3ad;letter-spacing:0.12px;left:1967.9px;-webkit-text-stroke:0;">Number</div>
<div style="left:2040.0px;top:472.3px;width:128.10000000000002px;height:20.9px;background:#21262d;border-radius:3px;"></div>
<div class="t" style="top:474.7px;height:16px;line-height:16px;font-size:12px;color:#f0f3f6;letter-spacing:0.46px;left:2045.4px;-webkit-text-stroke:0;">5</div>
<svg style="left:2193.2px;top:475.9px;color:#9aa3ad;" width="13.5" height="13.5" viewBox="0 0 24 24" fill="none" stroke="#9aa3ad" stroke-width="1.5" stroke-linecap="round" stroke-linejoin="round"><path d="M12.22 2h-.44a2 2 0 0 0-2 2v.18a2 2 0 0 1-1 1.73l-.43.25a2 2 0 0 1-2 0l-.15-.08a2 2 0 0 0-2.73.73l-.22.38a2 2 0 0 0 .73 2.73l.15.1a2 2 0 0 1 1 1.72v.51a2 2 0 0 1-1 1.74l-.15.09a2 2 0 0 0-.73 2.73l.22.38a2 2 0 0 0 2.73.73l.15-.08a2 2 0 0 1 2 0l.43.25a2 2 0 0 1 1 1.73V20a2 2 0 0 0 2 2h.44a2 2 0 0 0 2-2v-.18a2 2 0 0 1 1-1.73l.43-.25a2 2 0 0 1 2 0l.15.08a2 2 0 0 0 2.73-.73l.22-.39a2 2 0 0 0-.73-2.73l-.15-.08a2 2 0 0 1-1-1.74v-.5a2 2 0 0 1 1-1.74l.15-.09a2 2 0 0 0 .73-2.73l-.22-.38a2 2 0 0 0-2.73-.73l-.15.08a2 2 0 0 1-2 0l-.43-.25a2 2 0 0 1-1-1.73V4a2 2 0 0 0-2-2z"/><circle cx="12" cy="12" r="3"/></svg>
<div class="t" style="top:501.1px;height:16px;line-height:16px;font-size:12px;color:#f0f3f6;letter-spacing:0.24px;left:1856.3px;-webkit-text-stroke:0;">sharp</div>
<div class="t" style="top:503.3px;height:11px;line-height:11px;font-size:8px;color:#8b949e;letter-spacing:0.39px;left:1952.5px;-webkit-text-stroke:0;">{x}</div>
<div class="t" style="top:501.1px;height:16px;line-height:16px;font-size:12px;color:#9aa3ad;letter-spacing:0.08px;left:1967.9px;-webkit-text-stroke:0;">Variable</div>
<div style="left:2040.0px;top:498.7px;width:128.10000000000002px;height:20.9px;background:#21262d;border-radius:3px;"></div>
<div class="t" style="top:501.1px;height:16px;line-height:16px;font-size:12px;color:#9aa3ad;letter-spacing:0.26px;left:2045.4px;-webkit-text-stroke:0;">&lt;connected&gt;</div>
<svg style="left:2193.2px;top:502.3px;color:#9aa3ad;" width="13.5" height="13.5" viewBox="0 0 24 24" fill="none" stroke="#9aa3ad" stroke-width="1.5" stroke-linecap="round" stroke-linejoin="round"><path d="M12.22 2h-.44a2 2 0 0 0-2 2v.18a2 2 0 0 1-1 1.73l-.43.25a2 2 0 0 1-2 0l-.15-.08a2 2 0 0 0-2.73.73l-.22.38a2 2 0 0 0 .73 2.73l.15.1a2 2 0 0 1 1 1.72v.51a2 2 0 0 1-1 1.74l-.15.09a2 2 0 0 0-.73 2.73l.22.38a2 2 0 0 0 2.73.73l.15-.08a2 2 0 0 1 2 0l.43.25a2 2 0 0 1 1 1.73V20a2 2 0 0 0 2 2h.44a2 2 0 0 0 2-2v-.18a2 2 0 0 1 1-1.73l.43-.25a2 2 0 0 1 2 0l.15.08a2 2 0 0 0 2.73-.73l.22-.39a2 2 0 0 0-.73-2.73l-.15-.08a2 2 0 0 1-1-1.74v-.5a2 2 0 0 1 1-1.74l.15-.09a2 2 0 0 0 .73-2.73l-.22-.38a2 2 0 0 0-2.73-.73l-.15.08a2 2 0 0 1-2 0l-.43-.25a2 2 0 0 1-1-1.73V4a2 2 0 0 0-2-2z"/><circle cx="12" cy="12" r="3"/></svg>
<div style="left:1823.8px;top:540.5999999999999px;width:394px;height:84.0px;background:#161b22;border-radius:4px;"></div>
<svg style="left:1832.0px;top:553.1px;color:#c9d1d9;" width="11" height="11" viewBox="0 0 24 24" fill="none" stroke="#c9d1d9" stroke-width="1.8" stroke-linecap="round" stroke-linejoin="round"><circle cx="11" cy="12" r="8.500"/><path d="M9.500 12H22.500M19 8.500l3.500 3.500-3.500 3.500"/></svg>
<div class="t" style="top:550.1px;height:17px;line-height:17px;font-size:12.5px;color:#e6edf3;letter-spacing:-0.04px;left:1846.0px;font-weight:500;-webkit-text-stroke:0;-webkit-text-stroke:0.3px currentColor;">Output Handles</div>
<svg style="left:2189.5px;top:552.6px;color:#8b949e;" width="11" height="11" viewBox="0 0 24 24" fill="none" stroke="#8b949e" stroke-width="1.8" stroke-linecap="round" stroke-linejoin="round"><path d="M4.500 6A9 9 0 1 1 3 12"/><path d="M2.500 3.500l1.500 3.500 3.500-1"/><path d="M12 7.500v5l3 2.500"/></svg>
<div class="t" style="top:550.6px;height:12px;line-height:12px;font-size:9px;color:#8b949e;letter-spacing:0.30px;left:2203.2px;-webkit-text-stroke:0;">1</div>
<div class="t" style="top:574.0px;height:14px;line-height:14px;font-size:10.5px;color:#8b949e;letter-spacing:-0.13px;left:1851.1px;-webkit-text-stroke:0;">Key</div>
<div class="t" style="top:574.0px;height:14px;line-height:14px;font-size:10.5px;color:#8b949e;letter-spacing:0.18px;left:2003.2px;-webkit-text-stroke:0;">Type</div>
<div class="t" style="top:574.0px;height:14px;line-height:14px;font-size:10.5px;color:#8b949e;letter-spacing:0.30px;left:2160.7px;-webkit-text-stroke:0;">Nullable</div>
<div class="t" style="top:593.5px;height:16px;line-height:16px;font-size:12px;color:#f0f3f6;letter-spacing:0.24px;left:1856.3px;-webkit-text-stroke:0;">sharp</div>
<div class="t" style="top:595.7px;height:11px;line-height:11px;font-size:8px;color:#8b949e;letter-spacing:0.39px;left:2007.7px;-webkit-text-stroke:0;">{x}</div>
<div class="t" style="top:593.5px;height:16px;line-height:16px;font-size:12px;color:#9aa3ad;letter-spacing:0.08px;left:2023.2px;-webkit-text-stroke:0;">Variable</div>
<svg style="left:2193.2px;top:594.7px;color:#9aa3ad;" width="13.5" height="13.5" viewBox="0 0 24 24" fill="none" stroke="#9aa3ad" stroke-width="1.5" stroke-linecap="round" stroke-linejoin="round"><path d="M12.22 2h-.44a2 2 0 0 0-2 2v.18a2 2 0 0 1-1 1.73l-.43.25a2 2 0 0 1-2 0l-.15-.08a2 2 0 0 0-2.73.73l-.22.38a2 2 0 0 0 .73 2.73l.15.1a2 2 0 0 1 1 1.72v.51a2 2 0 0 1-1 1.74l-.15.09a2 2 0 0 0-.73 2.73l.22.38a2 2 0 0 0 2.73.73l.15-.08a2 2 0 0 1 2 0l.43.25a2 2 0 0 1 1 1.73V20a2 2 0 0 0 2 2h.44a2 2 0 0 0 2-2v-.18a2 2 0 0 1 1-1.73l.43-.25a2 2 0 0 1 2 0l.15.08a2 2 0 0 0 2.73-.73l.22-.39a2 2 0 0 0-.73-2.73l-.15-.08a2 2 0 0 1-1-1.74v-.5a2 2 0 0 1 1-1.74l.15-.09a2 2 0 0 0 .73-2.73l-.22-.38a2 2 0 0 0-2.73-.73l-.15.08a2 2 0 0 1-2 0l-.43-.25a2 2 0 0 1-1-1.73V4a2 2 0 0 0-2-2z"/><circle cx="12" cy="12" r="3"/></svg>
<div style="left:1823.8px;top:632.8px;width:394px;height:420.89999999999986px;background:#161b22;border-radius:4px;"></div>
<svg style="left:1832.4px;top:645.8px;color:#c9d1d9;" width="9" height="9" viewBox="0 0 24 24" fill="none" stroke="#c9d1d9" stroke-width="2.2" stroke-linecap="round" stroke-linejoin="round"><path d="M5 8.5l7 7 7-7"/></svg>
<div class="t" style="top:641.8px;height:17px;line-height:17px;font-size:12.5px;color:#e6edf3;letter-spacing:-0.22px;left:1846.0px;font-weight:500;-webkit-text-stroke:0;-webkit-text-stroke:0.3px currentColor;">Preview</div>
<svg style="left:2172.3px;top:644.8px;color:#9aa3ad;" width="11" height="11" viewBox="0 0 24 24" fill="none" stroke="#9aa3ad" stroke-width="2" stroke-linecap="round" stroke-linejoin="round"><path d="M12 3.500v12M7 11l5 5 5-5M4 17v3.500h16V17"/></svg>
<svg style="left:2194.5px;top:644.8px;color:#9aa3ad;" width="11" height="11" viewBox="0 0 24 24" fill="none" stroke="#9aa3ad" stroke-width="2" stroke-linecap="round" stroke-linejoin="round"><path d="M19.500 13v7.500h-16v-16H11"/><path d="M14.500 3.500h6v6M20.500 3.500L11 13"/></svg>
<svg style="left:1831.4px;top:667.6999999999999px;filter:contrast(1.1) brightness(1.02);" width="379" height="378" viewBox="0 0 400 400" preserveAspectRatio="none"><use href="#van" x="0" y="-100" width="400" height="600"/></svg>
<div style="left:1808.5px;top:474.9px;width:14px;height:14px;background:#0d1117;border-radius:50%;border:1px solid #353b43;box-sizing:border-box;"></div>
<div style="left:1811.7px;top:478.09999999999997px;width:7.6px;height:7.6px;background:#a6a3e8;border-radius:50%;"></div>
<div style="left:1808.5px;top:501.29999999999995px;width:14px;height:14px;background:#0d1117;border-radius:50%;border:1px solid #353b43;box-sizing:border-box;"></div>
<div style="left:1811.7px;top:504.49999999999994px;width:7.6px;height:7.6px;background:#6cb44a;border-radius:50%;"></div>
<div style="left:2219.0px;top:594.4999999999999px;width:14px;height:14px;background:#0d1117;border-radius:50%;border:1px solid #353b43;box-sizing:border-box;"></div>
<div style="left:2222.2px;top:597.6999999999999px;width:7.6px;height:7.6px;background:#6cb44a;border-radius:50%;"></div>
<svg style="left:1174.2px;top:1188.5px" width="27" height="27" viewBox="0 0 27 27" fill="none" stroke="#62c73b" stroke-width="2.200" stroke-linecap="round" stroke-linejoin="round"><circle cx="13.500" cy="13.500" r="12"/><path d="M8.500 14l3.500 4 7-8.500"/></svg>
<div class="t" style="top:1186.5px;height:32px;line-height:32px;font-size:23px;color:#f0f3f6;letter-spacing:0.25px;left:1209.2px;">Success</div>
<div style="left:1162.6px;top:1221.6px;width:411px;height:669.6000000000004px;background:#0d1117;border:1px solid #353b43;border-radius:8px;box-sizing:border-box;"></div>
<div style="left:1163.6px;top:1222.6px;width:409px;height:21.5px;background:#21262d;border-radius:7px 7px 0 0;"></div>
<svg style="left:1169.1px;top:1225.9px;color:#8b949e;" width="15" height="15" viewBox="0 0 24 24" fill="none" stroke="#8b949e" stroke-width="2" stroke-linecap="round" stroke-linejoin="round"><path d="M20 11A8.200 8.200 0 0 0 5.500 6.500L3.500 9M4 13a8.200 8.200 0 0 0 14.500 4.500l2-2.500"/><path d="M3.500 4v5h5M20.500 20v-5h-5"/></svg>
<div class="t" style="top:1225.4px;height:16px;line-height:16px;font-size:12px;color:#f0f3f6;letter-spacing:0.11px;left:1192.1px;font-weight:700;-webkit-text-stroke:0;">Rotate #1</div>
<svg style="left:1533.6px;top:1227.4px;color:#8b949e;" width="12" height="12" viewBox="0 0 24 24" fill="none" stroke="#8b949e" stroke-width="1.6" stroke-linecap="round" stroke-linejoin="round"><path d="M6.500 3.500l14 8.500-14 8.500z"/></svg>
<svg style="left:1553.1px;top:1227.4px;color:#8b949e;" width="12" height="12" viewBox="0 0 24 24" fill="#8b949e" stroke="none" stroke-linecap="round" stroke-linejoin="round"><circle cx="4.500" cy="12" r="1.600"/><circle cx="12" cy="12" r="1.600"/><circle cx="19.500" cy="12" r="1.600"/></svg>
<div style="left:1170.8999999999999px;top:1250.3px;width:394px;height:111.20000000000005px;background:#161b22;border-radius:4px;"></div>
<svg style="left:1179.1px;top:1262.9px;color:#c9d1d9;" width="11" height="11" viewBox="0 0 24 24" fill="none" stroke="#c9d1d9" stroke-width="1.8" stroke-linecap="round" stroke-linejoin="round"><path d="M8 5.200A8.500 8.500 0 1 1 8 18.800"/><path d="M1.500 12H14M10.500 8.500L14 12l-3.500 3.500"/></svg>
<div class="t" style="top:1259.9px;height:17px;line-height:17px;font-size:12.5px;color:#e6edf3;letter-spacing:-0.06px;left:1193.1px;font-weight:500;-webkit-text-stroke:0;-webkit-text-stroke:0.3px currentColor;">Input Handles</div>
<div class="t" style="top:1283.7px;height:14px;line-height:14px;font-size:10.5px;color:#8b949e;letter-spacing:-0.13px;left:1198.2px;-webkit-text-stroke:0;">Key</div>
<div class="t" style="top:1283.7px;height:14px;line-height:14px;font-size:10.5px;color:#8b949e;letter-spacing:0.18px;left:1295.3px;-webkit-text-stroke:0;">Type</div>
<div class="t" style="top:1283.7px;height:14px;line-height:14px;font-size:10.5px;color:#8b949e;letter-spacing:0.14px;left:1387.1px;-webkit-text-stroke:0;">Value</div>
<div class="t" style="top:1283.7px;height:14px;line-height:14px;font-size:10.5px;color:#8b949e;letter-spacing:0.30px;left:1507.8px;-webkit-text-stroke:0;">Nullable</div>
<div class="t" style="top:1304.0px;height:16px;line-height:16px;font-size:12px;color:#f0f3f6;letter-spacing:0.24px;left:1203.4px;-webkit-text-stroke:0;">sharp</div>
<div class="t" style="top:1306.2px;height:11px;line-height:11px;font-size:8px;color:#8b949e;letter-spacing:0.39px;left:1299.6px;-webkit-text-stroke:0;">{x}</div>
<div class="t" style="top:1304.0px;height:16px;line-height:16px;font-size:12px;color:#9aa3ad;letter-spacing:0.08px;left:1315.0px;-webkit-text-stroke:0;">Variable</div>
<div style="left:1387.1px;top:1301.6px;width:128.10000000000002px;height:20.9px;background:#21262d;border-radius:3px;"></div>
<div class="t" style="top:1304.0px;height:16px;line-height:16px;font-size:12px;color:#9aa3ad;letter-spacing:0.26px;left:1392.5px;-webkit-text-stroke:0;">&lt;connected&gt;</div>
<svg style="left:1540.3px;top:1305.2px;color:#9aa3ad;" width="13.5" height="13.5" viewBox="0 0 24 24" fill="none" stroke="#9aa3ad" stroke-width="1.5" stroke-linecap="round" stroke-linejoin="round"><path d="M12.22 2h-.44a2 2 0 0 0-2 2v.18a2 2 0 0 1-1 1.73l-.43.25a2 2 0 0 1-2 0l-.15-.08a2 2 0 0 0-2.73.73l-.22.38a2 2 0 0 0 .73 2.73l.15.1a2 2 0 0 1 1 1.72v.51a2 2 0 0 1-1 1.74l-.15.09a2 2 0 0 0-.73 2.73l.22.38a2 2 0 0 0 2.73.73l.15-.08a2 2 0 0 1 2 0l.43.25a2 2 0 0 1 1 1.73V20a2 2 0 0 0 2 2h.44a2 2 0 0 0 2-2v-.18a2 2 0 0 1 1-1.73l.43-.25a2 2 0 0 1 2 0l.15.08a2 2 0 0 0 2.73-.73l.22-.39a2 2 0 0 0-.73-2.73l-.15-.08a2 2 0 0 1-1-1.74v-.5a2 2 0 0 1 1-1.74l.15-.09a2 2 0 0 0 .73-2.73l-.22-.38a2 2 0 0 0-2.73-.73l-.15.08a2 2 0 0 1-2 0l-.43-.25a2 2 0 0 1-1-1.73V4a2 2 0 0 0-2-2z"/><circle cx="12" cy="12" r="3"/></svg>
<div class="t" style="top:1330.4px;height:16px;line-height:16px;font-size:12px;color:#f0f3f6;letter-spacing:0.30px;left:1203.4px;-webkit-text-stroke:0;">rotate</div>
<div class="t" style="top:1334.9px;height:8px;line-height:8px;font-size:6px;color:#8b949e;letter-spacing:-0.18px;left:1300.3px;-webkit-text-stroke:0;">123</div>
<div class="t" style="top:1330.4px;height:16px;line-height:16px;font-size:12px;color:#9aa3ad;letter-spacing:0.12px;left:1315.0px;-webkit-text-stroke:0;">Number</div>
<div style="left:1387.1px;top:1328.0px;width:128.10000000000002px;height:20.9px;background:#21262d;border-radius:3px;"></div>
<div class="t" style="top:1330.4px;height:16px;line-height:16px;font-size:12px;color:#f0f3f6;letter-spacing:0.46px;left:1392.5px;-webkit-text-stroke:0;">45</div>
<svg style="left:1540.3px;top:1331.7px;color:#9aa3ad;" width="13.5" height="13.5" viewBox="0 0 24 24" fill="none" stroke="#9aa3ad" stroke-width="1.5" stroke-linecap="round" stroke-linejoin="round"><path d="M12.22 2h-.44a2 2 0 0 0-2 2v.18a2 2 0 0 1-1 1.73l-.43.25a2 2 0 0 1-2 0l-.15-.08a2 2 0 0 0-2.73.73l-.22.38a2 2 0 0 0 .73 2.73l.15.1a2 2 0 0 1 1 1.72v.51a2 2 0 0 1-1 1.74l-.15.09a2 2 0 0 0-.73 2.73l.22.38a2 2 0 0 0 2.73.73l.15-.08a2 2 0 0 1 2 0l.43.25a2 2 0 0 1 1 1.73V20a2 2 0 0 0 2 2h.44a2 2 0 0 0 2-2v-.18a2 2 0 0 1 1-1.73l.43-.25a2 2 0 0 1 2 0l.15.08a2 2 0 0 0 2.73-.73l.22-.39a2 2 0 0 0-.73-2.73l-.15-.08a2 2 0 0 1-1-1.74v-.5a2 2 0 0 1 1-1.74l.15-.09a2 2 0 0 0 .73-2.73l-.22-.38a2 2 0 0 0-2.73-.73l-.15.08a2 2 0 0 1-2 0l-.43-.25a2 2 0 0 1-1-1.73V4a2 2 0 0 0-2-2z"/><circle cx="12" cy="12" r="3"/></svg>
<div style="left:1170.8999999999999px;top:1369.9px;width:394px;height:84.0px;background:#161b22;border-radius:4px;"></div>
<svg style="left:1179.1px;top:1382.4px;color:#c9d1d9;" width="11" height="11" viewBox="0 0 24 24" fill="none" stroke="#c9d1d9" stroke-width="1.8" stroke-linecap="round" stroke-linejoin="round"><circle cx="11" cy="12" r="8.500"/><path d="M9.500 12H22.500M19 8.500l3.500 3.500-3.500 3.500"/></svg>
<div class="t" style="top:1379.4px;height:17px;line-height:17px;font-size:12.5px;color:#e6edf3;letter-spacing:-0.04px;left:1193.1px;font-weight:500;-webkit-text-stroke:0;-webkit-text-stroke:0.3px currentColor;">Output Handles</div>
<svg style="left:1536.6px;top:1381.9px;color:#8b949e;" width="11" height="11" viewBox="0 0 24 24" fill="none" stroke="#8b949e" stroke-width="1.8" stroke-linecap="round" stroke-linejoin="round"><path d="M4.500 6A9 9 0 1 1 3 12"/><path d="M2.500 3.500l1.500 3.500 3.500-1"/><path d="M12 7.500v5l3 2.500"/></svg>
<div class="t" style="top:1379.9px;height:12px;line-height:12px;font-size:9px;color:#8b949e;letter-spacing:0.30px;left:1550.3px;-webkit-text-stroke:0;">1</div>
<div class="t" style="top:1403.3px;height:14px;line-height:14px;font-size:10.5px;color:#8b949e;letter-spacing:-0.13px;left:1198.2px;-webkit-text-stroke:0;">Key</div>
<div class="t" style="top:1403.3px;height:14px;line-height:14px;font-size:10.5px;color:#8b949e;letter-spacing:0.18px;left:1350.3px;-webkit-text-stroke:0;">Type</div>
<div class="t" style="top:1403.3px;height:14px;line-height:14px;font-size:10.5px;color:#8b949e;letter-spacing:0.30px;left:1507.8px;-webkit-text-stroke:0;">Nullable</div>
<div class="t" style="top:1422.8px;height:16px;line-height:16px;font-size:12px;color:#f0f3f6;letter-spacing:0.24px;left:1203.4px;-webkit-text-stroke:0;">sharp</div>
<div class="t" style="top:1425.0px;height:11px;line-height:11px;font-size:8px;color:#8b949e;letter-spacing:0.39px;left:1354.8px;-webkit-text-stroke:0;">{x}</div>
<div class="t" style="top:1422.8px;height:16px;line-height:16px;font-size:12px;color:#9aa3ad;letter-spacing:0.08px;left:1370.3px;-webkit-text-stroke:0;">Variable</div>
<svg style="left:1540.3px;top:1424.1px;color:#9aa3ad;" width="13.5" height="13.5" viewBox="0 0 24 24" fill="none" stroke="#9aa3ad" stroke-width="1.5" stroke-linecap="round" stroke-linejoin="round"><path d="M12.22 2h-.44a2 2 0 0 0-2 2v.18a2 2 0 0 1-1 1.73l-.43.25a2 2 0 0 1-2 0l-.15-.08a2 2 0 0 0-2.73.73l-.22.38a2 2 0 0 0 .73 2.73l.15.1a2 2 0 0 1 1 1.72v.51a2 2 0 0 1-1 1.74l-.15.09a2 2 0 0 0-.73 2.73l.22.38a2 2 0 0 0 2.73.73l.15-.08a2 2 0 0 1 2 0l.43.25a2 2 0 0 1 1 1.73V20a2 2 0 0 0 2 2h.44a2 2 0 0 0 2-2v-.18a2 2 0 0 1 1-1.73l.43-.25a2 2 0 0 1 2 0l.15.08a2 2 0 0 0 2.73-.73l.22-.39a2 2 0 0 0-.73-2.73l-.15-.08a2 2 0 0 1-1-1.74v-.5a2 2 0 0 1 1-1.74l.15-.09a2 2 0 0 0 .73-2.73l-.22-.38a2 2 0 0 0-2.73-.73l-.15.08a2 2 0 0 1-2 0l-.43-.25a2 2 0 0 1-1-1.73V4a2 2 0 0 0-2-2z"/><circle cx="12" cy="12" r="3"/></svg>
<div style="left:1170.8999999999999px;top:1462.1000000000001px;width:394px;height:420.9000000000001px;background:#161b22;border-radius:4px;"></div>
<svg style="left:1179.5px;top:1475.1px;color:#c9d1d9;" width="9" height="9" viewBox="0 0 24 24" fill="none" stroke="#c9d1d9" stroke-width="2.2" stroke-linecap="round" stroke-linejoin="round"><path d="M5 8.5l7 7 7-7"/></svg>
<div class="t" style="top:1471.1px;height:17px;line-height:17px;font-size:12.5px;color:#e6edf3;letter-spacing:-0.22px;left:1193.1px;font-weight:500;-webkit-text-stroke:0;-webkit-text-stroke:0.3px currentColor;">Preview</div>
<svg style="left:1519.4px;top:1474.1px;color:#9aa3ad;" width="11" height="11" viewBox="0 0 24 24" fill="none" stroke="#9aa3ad" stroke-width="2" stroke-linecap="round" stroke-linejoin="round"><path d="M12 3.500v12M7 11l5 5 5-5M4 17v3.500h16V17"/></svg>
<svg style="left:1541.6px;top:1474.1px;color:#9aa3ad;" width="11" height="11" viewBox="0 0 24 24" fill="none" stroke="#9aa3ad" stroke-width="2" stroke-linecap="round" stroke-linejoin="round"><path d="M19.500 13v7.500h-16v-16H11"/><path d="M14.500 3.500h6v6M20.500 3.500L11 13"/></svg>
<svg style="left:1178.5px;top:1497.0000000000002px;" width="379" height="378" viewBox="0 0 400 400" preserveAspectRatio="none"><use href="#van" x="0" y="-100" width="400" height="600"/></svg>
<div style="left:1155.6px;top:1304.2px;width:14px;height:14px;background:#0d1117;border-radius:50%;border:1px solid #353b43;box-sizing:border-box;"></div>
<div style="left:1158.8px;top:1307.4px;width:7.6px;height:7.6px;background:#6cb44a;border-radius:50%;"></div>
<div style="left:1155.6px;top:1330.6000000000001px;width:14px;height:14px;background:#0d1117;border-radius:50%;border:1px solid #353b43;box-sizing:border-box;"></div>
<div style="left:1158.8px;top:1333.8000000000002px;width:7.6px;height:7.6px;background:#a6a3e8;border-radius:50%;"></div>
<div style="left:1566.1px;top:1423.8000000000002px;width:14px;height:14px;background:#0d1117;border-radius:50%;border:1px solid #353b43;box-sizing:border-box;"></div>
<div style="left:1569.3px;top:1427.0000000000002px;width:7.6px;height:7.6px;background:#6cb44a;border-radius:50%;"></div>
<svg style="left:1792.8px;top:1237.2px" width="27" height="27" viewBox="0 0 27 27" fill="none" stroke="#62c73b" stroke-width="2.200" stroke-linecap="round" stroke-linejoin="round"><circle cx="13.500" cy="13.500" r="12"/><path d="M8.500 14l3.500 4 7-8.500"/></svg>
<div class="t" style="top:1235.2px;height:32px;line-height:32px;font-size:23px;color:#f0f3f6;letter-spacing:0.25px;left:1827.8px;">Success</div>
<div style="left:1781.4px;top:1271px;width:518px;height:643.2000000000003px;background:#0d1117;border:1px solid #353b43;border-radius:8px;box-sizing:border-box;"></div>
<div style="left:1782.4px;top:1272px;width:516px;height:21.5px;background:#21262d;border-radius:7px 7px 0 0;"></div>
<svg style="left:1787.9px;top:1275.3px;color:#8b949e;" width="15" height="15" viewBox="0 0 24 24" fill="none" stroke="#8b949e" stroke-width="2" stroke-linecap="round" stroke-linejoin="round"><path d="M3.500 8.500V4h5M15.500 4h5v4.500M20.500 15.500V20h-5M8.500 20h-5v-4.500"/></svg>
<div class="t" style="top:1274.8px;height:16px;line-height:16px;font-size:12px;color:#aab2bb;letter-spacing:0.18px;left:1810.9px;font-weight:700;-webkit-text-stroke:0;">GreyScale#1</div>
<svg style="left:2259.4px;top:1276.8px;color:#8b949e;" width="12" height="12" viewBox="0 0 24 24" fill="none" stroke="#8b949e" stroke-width="1.6" stroke-linecap="round" stroke-linejoin="round"><path d="M6.500 3.500l14 8.500-14 8.500z"/></svg>
<svg style="left:2278.9px;top:1276.8px;color:#8b949e;" width="12" height="12" viewBox="0 0 24 24" fill="#8b949e" stroke="none" stroke-linecap="round" stroke-linejoin="round"><circle cx="4.500" cy="12" r="1.600"/><circle cx="12" cy="12" r="1.600"/><circle cx="19.500" cy="12" r="1.600"/></svg>
<div style="left:1789.7px;top:1299.7px;width:501px;height:84.79999999999995px;background:#161b22;border-radius:4px;"></div>
<svg style="left:1797.9px;top:1312.3px;color:#c9d1d9;" width="11" height="11" viewBox="0 0 24 24" fill="none" stroke="#c9d1d9" stroke-width="1.8" stroke-linecap="round" stroke-linejoin="round"><path d="M8 5.200A8.500 8.500 0 1 1 8 18.800"/><path d="M1.500 12H14M10.500 8.500L14 12l-3.500 3.500"/></svg>
<div class="t" style="top:1309.3px;height:17px;line-height:17px;font-size:12.5px;color:#e6edf3;letter-spacing:-0.06px;left:1811.9px;font-weight:500;-webkit-text-stroke:0;-webkit-text-stroke:0.3px currentColor;">Input Handles</div>
<div class="t" style="top:1333.1px;height:14px;line-height:14px;font-size:10.5px;color:#8b949e;letter-spacing:-0.13px;left:1817.6px;-webkit-text-stroke:0;">Key</div>
<div class="t" style="top:1333.1px;height:14px;line-height:14px;font-size:10.5px;color:#8b949e;letter-spacing:0.18px;left:1949.8px;-webkit-text-stroke:0;">Type</div>
<div class="t" style="top:1333.1px;height:14px;line-height:14px;font-size:10.5px;color:#8b949e;letter-spacing:0.14px;left:2060.4px;-webkit-text-stroke:0;">Value</div>
<div class="t" style="top:1333.1px;height:14px;line-height:14px;font-size:10.5px;color:#8b949e;letter-spacing:0.30px;left:2233.9px;-webkit-text-stroke:0;">Nullable</div>
<div class="t" style="top:1353.4px;height:16px;line-height:16px;font-size:12px;color:#f0f3f6;letter-spacing:0.24px;left:1822.8px;-webkit-text-stroke:0;">sharp</div>
<div class="t" style="top:1355.6px;height:11px;line-height:11px;font-size:8px;color:#8b949e;letter-spacing:0.39px;left:1954.1px;-webkit-text-stroke:0;">{x}</div>
<div class="t" style="top:1353.4px;height:16px;line-height:16px;font-size:12px;color:#9aa3ad;letter-spacing:0.08px;left:1969.5px;-webkit-text-stroke:0;">Variable</div>
<div style="left:2060.4px;top:1351.0px;width:181px;height:20.9px;background:#21262d;border-radius:3px;"></div>
<div class="t" style="top:1353.4px;height:16px;line-height:16px;font-size:12px;color:#9aa3ad;letter-spacing:0.26px;left:2065.8px;-webkit-text-stroke:0;">&lt;connected&gt;</div>
<svg style="left:2266.5px;top:1354.7px;color:#9aa3ad;" width="13.5" height="13.5" viewBox="0 0 24 24" fill="none" stroke="#9aa3ad" stroke-width="1.5" stroke-linecap="round" stroke-linejoin="round"><path d="M12.22 2h-.44a2 2 0 0 0-2 2v.18a2 2 0 0 1-1 1.73l-.43.25a2 2 0 0 1-2 0l-.15-.08a2 2 0 0 0-2.73.73l-.22.38a2 2 0 0 0 .73 2.73l.15.1a2 2 0 0 1 1 1.72v.51a2 2 0 0 1-1 1.74l-.15.09a2 2 0 0 0-.73 2.73l.22.38a2 2 0 0 0 2.73.73l.15-.08a2 2 0 0 1 2 0l.43.25a2 2 0 0 1 1 1.73V20a2 2 0 0 0 2 2h.44a2 2 0 0 0 2-2v-.18a2 2 0 0 1 1-1.73l.43-.25a2 2 0 0 1 2 0l.15.08a2 2 0 0 0 2.73-.73l.22-.39a2 2 0 0 0-.73-2.73l-.15-.08a2 2 0 0 1-1-1.74v-.5a2 2 0 0 1 1-1.74l.15-.09a2 2 0 0 0 .73-2.73l-.22-.38a2 2 0 0 0-2.73-.73l-.15.08a2 2 0 0 1-2 0l-.43-.25a2 2 0 0 1-1-1.73V4a2 2 0 0 0-2-2z"/><circle cx="12" cy="12" r="3"/></svg>
<div style="left:1789.7px;top:1392.9px;width:501px;height:84.0px;background:#161b22;border-radius:4px;"></div>
<svg style="left:1797.9px;top:1405.4px;color:#c9d1d9;" width="11" height="11" viewBox="0 0 24 24" fill="none" stroke="#c9d1d9" stroke-width="1.8" stroke-linecap="round" stroke-linejoin="round"><circle cx="11" cy="12" r="8.500"/><path d="M9.500 12H22.500M19 8.500l3.500 3.500-3.500 3.500"/></svg>
<div class="t" style="top:1402.4px;height:17px;line-height:17px;font-size:12.5px;color:#e6edf3;letter-spacing:-0.04px;left:1811.9px;font-weight:500;-webkit-text-stroke:0;-webkit-text-stroke:0.3px currentColor;">Output Handles</div>
<svg style="left:2262.7px;top:1404.9px;color:#8b949e;" width="11" height="11" viewBox="0 0 24 24" fill="none" stroke="#8b949e" stroke-width="1.8" stroke-linecap="round" stroke-linejoin="round"><path d="M4.500 6A9 9 0 1 1 3 12"/><path d="M2.500 3.500l1.500 3.500 3.500-1"/><path d="M12 7.500v5l3 2.500"/></svg>
<div class="t" style="top:1402.9px;height:12px;line-height:12px;font-size:9px;color:#8b949e;letter-spacing:0.30px;left:2276.4px;-webkit-text-stroke:0;">1</div>
<div class="t" style="top:1426.3px;height:14px;line-height:14px;font-size:10.5px;color:#8b949e;letter-spacing:-0.13px;left:1817.6px;-webkit-text-stroke:0;">Key</div>
<div class="t" style="top:1426.3px;height:14px;line-height:14px;font-size:10.5px;color:#8b949e;letter-spacing:0.18px;left:2021.4px;-webkit-text-stroke:0;">Type</div>
<div class="t" style="top:1426.3px;height:14px;line-height:14px;font-size:10.5px;color:#8b949e;letter-spacing:0.30px;left:2233.9px;-webkit-text-stroke:0;">Nullable</div>
<div class="t" style="top:1445.8px;height:16px;line-height:16px;font-size:12px;color:#f0f3f6;letter-spacing:0.24px;left:1822.8px;-webkit-text-stroke:0;">sharp</div>
<div class="t" style="top:1448.0px;height:11px;line-height:11px;font-size:8px;color:#8b949e;letter-spacing:0.39px;left:2025.9px;-webkit-text-stroke:0;">{x}</div>
<div class="t" style="top:1445.8px;height:16px;line-height:16px;font-size:12px;color:#9aa3ad;letter-spacing:0.08px;left:2041.4px;-webkit-text-stroke:0;">Variable</div>
<svg style="left:2266.5px;top:1447.1px;color:#9aa3ad;" width="13.5" height="13.5" viewBox="0 0 24 24" fill="none" stroke="#9aa3ad" stroke-width="1.5" stroke-linecap="round" stroke-linejoin="round"><path d="M12.22 2h-.44a2 2 0 0 0-2 2v.18a2 2 0 0 1-1 1.73l-.43.25a2 2 0 0 1-2 0l-.15-.08a2 2 0 0 0-2.73.73l-.22.38a2 2 0 0 0 .73 2.73l.15.1a2 2 0 0 1 1 1.72v.51a2 2 0 0 1-1 1.74l-.15.09a2 2 0 0 0-.73 2.73l.22.38a2 2 0 0 0 2.73.73l.15-.08a2 2 0 0 1 2 0l.43.25a2 2 0 0 1 1 1.73V20a2 2 0 0 0 2 2h.44a2 2 0 0 0 2-2v-.18a2 2 0 0 1 1-1.73l.43-.25a2 2 0 0 1 2 0l.15.08a2 2 0 0 0 2.73-.73l.22-.39a2 2 0 0 0-.73-2.73l-.15-.08a2 2 0 0 1-1-1.74v-.5a2 2 0 0 1 1-1.74l.15-.09a2 2 0 0 0 .73-2.73l-.22-.38a2 2 0 0 0-2.73-.73l-.15.08a2 2 0 0 1-2 0l-.43-.25a2 2 0 0 1-1-1.73V4a2 2 0 0 0-2-2z"/><circle cx="12" cy="12" r="3"/></svg>
<div style="left:1789.7px;top:1485.1000000000001px;width:501px;height:420.9000000000001px;background:#161b22;border-radius:4px;"></div>
<svg style="left:1798.3px;top:1498.1px;color:#c9d1d9;" width="9" height="9" viewBox="0 0 24 24" fill="none" stroke="#c9d1d9" stroke-width="2.2" stroke-linecap="round" stroke-linejoin="round"><path d="M5 8.5l7 7 7-7"/></svg>
<div class="t" style="top:1494.1px;height:17px;line-height:17px;font-size:12.5px;color:#e6edf3;letter-spacing:-0.22px;left:1811.9px;font-weight:500;-webkit-text-stroke:0;-webkit-text-stroke:0.3px currentColor;">Preview</div>
<svg style="left:2245.5px;top:1497.1px;color:#9aa3ad;" width="11" height="11" viewBox="0 0 24 24" fill="none" stroke="#9aa3ad" stroke-width="2" stroke-linecap="round" stroke-linejoin="round"><path d="M12 3.500v12M7 11l5 5 5-5M4 17v3.500h16V17"/></svg>
<svg style="left:2267.7px;top:1497.1px;color:#9aa3ad;" width="11" height="11" viewBox="0 0 24 24" fill="none" stroke="#9aa3ad" stroke-width="2" stroke-linecap="round" stroke-linejoin="round"><path d="M19.500 13v7.500h-16v-16H11"/><path d="M14.500 3.500h6v6M20.500 3.500L11 13"/></svg>
<svg style="left:1797.3000000000002px;top:1520.0000000000002px;filter:grayscale(1);" width="486" height="378" viewBox="0 0 400 400" preserveAspectRatio="none"><use href="#van" x="0" y="-100" width="400" height="600"/></svg>
<div style="left:1774.4px;top:1353.6000000000001px;width:14px;height:14px;background:#0d1117;border-radius:50%;border:1px solid #353b43;box-sizing:border-box;"></div>
<div style="left:1777.6000000000001px;top:1356.8000000000002px;width:7.6px;height:7.6px;background:#6cb44a;border-radius:50%;"></div>
<div style="left:2291.9px;top:1446.8000000000002px;width:14px;height:14px;background:#0d1117;border-radius:50%;border:1px solid #353b43;box-sizing:border-box;"></div>
<div style="left:2295.1px;top:1450.0000000000002px;width:7.6px;height:7.6px;background:#6cb44a;border-radius:50%;"></div>
<div style="left:742.4px;top:1170.7px;width:55.5px;height:210.5px;background:#161b22;border:2px solid #434a56;border-radius:10px;box-sizing:border-box;"></div>
<svg style="left:753.5px;top:1181.0px;color:#e6edf3;" width="34" height="34" viewBox="0 0 24 24" fill="none" stroke="#e6edf3" stroke-width="1.25" stroke-linecap="round" stroke-linejoin="round"><circle cx="10" cy="10" r="7"/><path d="M15.500 15.500l6.500 6.500M6.500 10h7M10 6.500v7"/></svg>
<svg style="left:753.5px;top:1233.0px;color:#e6edf3;" width="34" height="34" viewBox="0 0 24 24" fill="none" stroke="#e6edf3" stroke-width="1.25" stroke-linecap="round" stroke-linejoin="round"><circle cx="10" cy="10" r="7"/><path d="M15.500 15.500l6.500 6.500M6.500 10h7"/></svg>
<svg style="left:755.0px;top:1287.0px;color:#e6edf3;" width="30" height="30" viewBox="0 0 24 24" fill="none" stroke="#e6edf3" stroke-width="1.4" stroke-linecap="round" stroke-linejoin="round"><rect x="2.500" y="4.500" width="19" height="15" rx="2"/><path d="M6 12h12M9 9l-3 3 3 3M15 9l3 3-3 3"/></svg>
<svg style="left:754.5px;top:1339.0px;color:#e6edf3;" width="31" height="31" viewBox="0 0 24 24" fill="none" stroke="#e6edf3" stroke-width="1.4" stroke-linecap="round" stroke-linejoin="round"><rect x="4" y="4" width="6" height="10"/><rect x="14" y="4" width="6" height="4"/><rect x="14" y="12" width="6" height="8"/><rect x="4" y="18" width="6" height="2.500"/></svg>
<div style="left:2079px;top:1323.3px;width:166px;height:57.7px;background:#161b22;border:2px solid #434a56;border-radius:10px;box-sizing:border-box;"></div>
<svg style="left:2093.6px;top:1338.0px;color:#e6edf3;" width="28" height="28" viewBox="0 0 24 24" fill="none" stroke="#e6edf3" stroke-width="1.4" stroke-linecap="round" stroke-linejoin="round"><rect x="3" y="4.500" width="18" height="15" rx="2.500"/><path d="M9 15.500h6"/></svg>
<svg style="left:2146.8px;top:1337.0px;color:#e6edf3;" width="30" height="30" viewBox="0 0 24 24" fill="none" stroke="#e6edf3" stroke-width="1.4" stroke-linecap="round" stroke-linejoin="round"><path d="M2.500 6.500l6.500-3 6 3 6.500-3v14l-6.500 3-6-3-6.500 3z"/><path d="M9 3.500v14M15 6.500v14"/></svg>
<svg style="left:2201.6px;top:1338.0px;color:#e6edf3;" width="28" height="28" viewBox="0 0 24 24" fill="none" stroke="#e6edf3" stroke-width="1.5" stroke-linecap="round" stroke-linejoin="round"><path d="M4 9V4.500h5M15 4.500h5V9M20 15v4.500h-5M9 19.500H4V15"/></svg>
</div></div>
<div style="left:134px;top:98px;width:24px;height:24px;background:#ec6a5e;border-radius:50%;"></div>
<div style="left:174px;top:98px;width:24px;height:24px;background:#f4bf4f;border-radius:50%;"></div>
<div style="left:214px;top:98px;width:24px;height:24px;background:#61c554;border-radius:50%;"></div>
<svg style="left:870.0px;top:94.0px;color:#8b949e;" width="32" height="32" viewBox="0 0 24 24" fill="none" stroke="#8b949e" stroke-width="1.5" stroke-linecap="round" stroke-linejoin="round"><path d="M20 12H4M11 19l-7-7 7-7"/></svg>
<svg style="left:922.0px;top:94.0px;color:#8b949e;" width="32" height="32" viewBox="0 0 24 24" fill="none" stroke="#8b949e" stroke-width="1.5" stroke-linecap="round" stroke-linejoin="round"><path d="M4 12h16M13 5l7 7-7 7"/></svg>
<div style="left:981px;top:87px;width:1052px;height:46px;background:#21262d;border-radius:12px;border:2px solid #3a4048;box-sizing:border-box;"></div>
<svg style="left:1418.0px;top:95.0px;color:#cfd3d8;" width="30" height="30" viewBox="0 0 24 24" fill="none" stroke="#cfd3d8" stroke-width="1.5" stroke-linecap="round" stroke-linejoin="round"><circle cx="14.5" cy="9.5" r="6.2"/><path d="M10 14L2.5 21.5"/></svg>
<div class="t" style="top:92.0px;height:36px;line-height:36px;font-size:26px;color:#d5dbe2;letter-spacing:-0.26px;left:1457.0px;">sharp [OVM]</div>
<svg style="left:2057.0px;top:91.0px" width="36" height="36" viewBox="0 0 24 24" fill="none" stroke="#cfd3d8" stroke-width="1.400" stroke-linecap="round" stroke-linejoin="round"><path d="M3.300 11C1.800 7 2.200 2.400 5 2c2.600-.300 5.200 3 7 6.200M20.700 11c1.500-4 1.100-8.600-1.700-9-2.600-.300-5.200 3-7 6.200"/><path d="M7.400 10.900h9.200a2.500 2.500 0 0 1 2.500 2.500v.400a2.500 2.500 0 0 1-2.500 2.500h-1.700l-2.900-1.700-2.900 1.700H7.400a2.500 2.500 0 0 1-2.500-2.500v-.400a2.500 2.500 0 0 1 2.500-2.500z"/><path d="M3 16.500c.500 3.500 4 5.700 9 5.700s8.500-2.200 9-5.700"/></svg>
<svg style="left:2098.0px;top:101.0px;color:#cfd3d8;" width="20" height="20" viewBox="0 0 24 24" fill="none" stroke="#cfd3d8" stroke-width="1.8" stroke-linecap="round" stroke-linejoin="round"><path d="M5 8.5l7 7 7-7"/></svg>
<svg style="left:2607.0px;top:94.0px;color:#cfd3d8;" width="32" height="32" viewBox="0 0 24 24" fill="none" stroke="#cfd3d8" stroke-width="1.6" stroke-linecap="round" stroke-linejoin="round"><rect x="3" y="3.500" width="7.500" height="17" rx="1.500"/><rect x="14.500" y="3.500" width="6.500" height="6" rx="1.500"/><rect x="14.500" y="14.500" width="6.500" height="6" rx="1.500"/></svg>
<svg style="left:2658.0px;top:94.0px;color:#cfd3d8;" width="32" height="32" viewBox="0 0 24 24" fill="none" stroke="#cfd3d8" stroke-width="1.6" stroke-linecap="round" stroke-linejoin="round"><rect x="2.500" y="3" width="19" height="18" rx="2" fill="none"/><path d="M2.500 5a2 2 0 0 1 2-2H11v18H4.500a2 2 0 0 1-2-2z" fill="currentColor"/></svg>
<svg style="left:2710.0px;top:94.0px;color:#cfd3d8;" width="32" height="32" viewBox="0 0 24 24" fill="none" stroke="#cfd3d8" stroke-width="1.6" stroke-linecap="round" stroke-linejoin="round"><rect x="2.500" y="3" width="19" height="18" rx="2" fill="none"/><path d="M2.500 14h19v5a2 2 0 0 1-2 2h-15a2 2 0 0 1-2-2z" fill="currentColor"/></svg>
<svg style="left:2761.0px;top:94.0px;color:#cfd3d8;" width="32" height="32" viewBox="0 0 24 24" fill="none" stroke="#cfd3d8" stroke-width="1.6" stroke-linecap="round" stroke-linejoin="round"><rect x="2.500" y="3" width="19" height="18" rx="2" fill="none"/><path d="M13 3h6.500a2 2 0 0 1 2 2v14a2 2 0 0 1-2 2H13z" fill="currentColor"/></svg>
<svg style="left:2812.0px;top:93.0px;color:#cfd3d8;" width="34" height="34" viewBox="0 0 24 24" fill="none" stroke="#cfd3d8" stroke-width="1.6" stroke-linecap="round" stroke-linejoin="round"><path d="M12.22 2h-.44a2 2 0 0 0-2 2v.18a2 2 0 0 1-1 1.73l-.43.25a2 2 0 0 1-2 0l-.15-.08a2 2 0 0 0-2.73.73l-.22.38a2 2 0 0 0 .73 2.73l.15.1a2 2 0 0 1 1 1.72v.51a2 2 0 0 1-1 1.74l-.15.09a2 2 0 0 0-.73 2.73l.22.38a2 2 0 0 0 2.73.73l.15-.08a2 2 0 0 1 2 0l.43.25a2 2 0 0 1 1 1.73V20a2 2 0 0 0 2 2h.44a2 2 0 0 0 2-2v-.18a2 2 0 0 1 1-1.73l.43-.25a2 2 0 0 1 2 0l.15.08a2 2 0 0 0 2.73-.73l.22-.39a2 2 0 0 0-.73-2.73l-.15-.08a2 2 0 0 1-1-1.74v-.5a2 2 0 0 1 1-1.74l.15-.09a2 2 0 0 0 .73-2.73l-.22-.38a2 2 0 0 0-2.73-.73l-.15.08a2 2 0 0 1-2 0l-.43-.25a2 2 0 0 1-1-1.73V4a2 2 0 0 0-2-2z"/><circle cx="12" cy="12" r="3"/></svg>
<div style="left:112px;top:144px;width:2764px;height:2px;background:#2e2e2e;"></div>
<div style="left:112px;top:214px;width:2764px;height:2px;background:#2e2e2e;"></div>
<div style="left:710px;top:146px;width:2px;height:1867px;background:#2e2e2e;"></div>
<div style="left:2276px;top:146px;width:2px;height:1867px;background:#2e2e2e;"></div>
<svg style="left:128.0px;top:161.0px;color:#e6edf3;" width="36" height="36" viewBox="0 0 24 24" fill="none" stroke="#e6edf3" stroke-width="1.5" stroke-linecap="round" stroke-linejoin="round"><path d="M10.500 2.500h6l4 4v9.500a1.500 1.500 0 0 1-1.500 1.500h-8.500a1.500 1.500 0 0 1-1.500-1.500v-12a1.500 1.500 0 0 1 1.500-1.500z"/><path d="M16 2.500v4.500h4.500"/><path d="M9 7H5a1.500 1.500 0 0 0-1.500 1.500v11.500a1.500 1.500 0 0 0 1.500 1.500h8.500a1.500 1.500 0 0 0 1.500-1.500v-2.500"/></svg>
<svg style="left:180.0px;top:161.0px;color:#8f949b;" width="36" height="36" viewBox="0 0 24 24" fill="none" stroke="#8f949b" stroke-width="1.5" stroke-linecap="round" stroke-linejoin="round"><circle cx="14.5" cy="9.5" r="6.2"/><path d="M10 14L2.5 21.5"/></svg>
<svg style="left:231.0px;top:161.0px;color:#8f949b;" width="36" height="36" viewBox="0 0 24 24" fill="none" stroke="#8f949b" stroke-width="1.5" stroke-linecap="round" stroke-linejoin="round"><circle cx="6.5" cy="4.500" r="2.500"/><circle cx="6.500" cy="19.500" r="2.500"/><circle cx="17.500" cy="8" r="2.500"/><path d="M6.500 7v10M17.500 10.500c0 4.500-11 2.500-11 6.500"/></svg>
<svg style="left:283.0px;top:161.0px;color:#8f949b;" width="36" height="36" viewBox="0 0 24 24" fill="none" stroke="#8f949b" stroke-width="1.5" stroke-linecap="round" stroke-linejoin="round"><path d="M2.500 8.500h7.500v13h-7.500zM2.500 15h15v6.500h-7.500M17.500 15v6.500"/><rect x="13.500" y="2.500" width="8" height="8"/></svg>
<svg style="left:337.0px;top:162.0px;color:#8f949b;" width="34" height="34" viewBox="0 0 24 24" fill="none" stroke="#8f949b" stroke-width="1.5" stroke-linecap="round" stroke-linejoin="round"><path d="M2.500 5.500h7.500l2 2.500h9.500v12h-19z"/><path d="M2.500 10.500h19"/></svg>
<svg style="left:388.0px;top:162.0px;color:#8f949b;" width="34" height="34" viewBox="0 0 24 24" fill="none" stroke="#8f949b" stroke-width="1.5" stroke-linecap="round" stroke-linejoin="round"><circle cx="15.800" cy="8.200" r="5.700"/><circle cx="17.500" cy="6.500" r="1" fill="currentColor"/><path d="M11.300 11.500L2.800 20v2.200h3.400v-2.200h2.300v-2.200h2.300l2.200-2.300"/></svg>
<div style="left:124px;top:211px;width:44px;height:2px;background:#e6edf3;"></div>
<div style="left:250px;top:179px;width:26px;height:26px;background:#7c7ce6;border-radius:50%;"></div>
<div class="t" style="top:179.5px;height:25px;line-height:25px;font-size:18px;color:#fff;letter-spacing:0.00px;left:256.5px;font-weight:700;">9</div>
<div style="left:712px;top:146px;width:238px;height:68px;background:#0d1117;"></div>
<div style="left:712px;top:146px;width:238px;height:2px;background:#7c7ce6;"></div>
<div style="left:950px;top:146px;width:2px;height:68px;background:#2e2e2e;"></div>
<svg style="left:738.0px;top:167.0px;color:#e6edf3;" width="28" height="28" viewBox="0 0 24 24" fill="none" stroke="#e6edf3" stroke-width="1.5" stroke-linecap="round" stroke-linejoin="round"><rect x="4" y="2.500" width="6.500" height="6.500" rx="1"/><path d="M7.250 9v3.500"/><path d="M7.250 12.500l3.250 3.250-3.250 3.250-3.250-3.250z"/><path d="M10.500 15.750h5"/><rect x="15.500" y="13" width="5.500" height="5.500" rx="1"/></svg>
<div class="t" style="top:163.0px;height:36px;line-height:36px;font-size:26px;color:#ffffff;letter-spacing:-0.43px;left:776.0px;">Flow 1</div>
<svg style="left:910.0px;top:169.0px;color:#e6edf3;" width="24" height="24" viewBox="0 0 24 24" fill="none" stroke="#e6edf3" stroke-width="1.8" stroke-linecap="round" stroke-linejoin="round"><path d="M5 5l14 14M19 5L5 19"/></svg>
<svg style="left:2004.5px;top:166.0px;color:#cfd3d8;" width="32" height="32" viewBox="0 0 24 24" fill="none" stroke="#cfd3d8" stroke-width="1.6" stroke-linecap="round" stroke-linejoin="round"><path d="M6.500 3.500l14 8.500-14 8.500z"/></svg>
<svg style="left:2057.0px;top:166.0px;color:#cfd3d8;" width="32" height="32" viewBox="0 0 24 24" fill="none" stroke="#cfd3d8" stroke-width="1.6" stroke-linecap="round" stroke-linejoin="round"><path d="M10 9.500v-6l11.500 7.500-7.500 5"/><path d="M10.500 14.500A4.500 4.500 0 1 1 6 12.500"/><path d="M2 9.500v4h4"/></svg>
<svg style="left:2111.0px;top:165.0px;color:#cfd3d8;" width="32" height="32" viewBox="0 0 24 24" fill="none" stroke="#cfd3d8" stroke-width="1.6" stroke-linecap="round" stroke-linejoin="round"><path d="M10.500 3h7l3.500 3.500V21.500H6.500V11"/><path d="M17 3v4h4"/><path d="M2.500 9.500V8a2.500 2.500 0 0 1 2.500-2.500h4.500M7 3l2.500 2.500L7 8"/></svg>
<svg style="left:2163.0px;top:165.0px;color:#cfd3d8;" width="32" height="32" viewBox="0 0 24 24" fill="none" stroke="#cfd3d8" stroke-width="1.6" stroke-linecap="round" stroke-linejoin="round"><rect x="3" y="3.500" width="18" height="17" rx="1"/><path d="M12 3.500v17"/></svg>
<svg style="left:2216.0px;top:167.0px;color:#cfd3d8;" width="28" height="28" viewBox="0 0 24 24" fill="#cfd3d8" stroke="none" stroke-linecap="round" stroke-linejoin="round"><circle cx="4.500" cy="12" r="1.600"/><circle cx="12" cy="12" r="1.600"/><circle cx="19.500" cy="12" r="1.600"/></svg>
<svg style="left:2297.0px;top:165.0px;color:#e6edf3;" width="32" height="32" viewBox="0 0 24 24" fill="none" stroke="#e6edf3" stroke-width="1.5" stroke-linecap="round" stroke-linejoin="round"><path d="M2.500 8l9 -3.500 10 3v10.500l-10.500 3.500-8.500-4z"/><path d="M2.500 8l8.500 3 10.500-3.500M11 11v10.500"/><path d="M16.500 9.250v3"/></svg>
<svg style="left:2347.0px;top:163.0px;color:#8f949b;" width="32" height="32" viewBox="0 0 24 24" fill="none" stroke="#8f949b" stroke-width="1.5" stroke-linecap="round" stroke-linejoin="round"><rect x="3.500" y="8" width="17" height="4"/><path d="M5 12v9.500h14V12M12 8v13.500"/><path d="M12 8c-1.500-6-8-4-4 0M12 8c1.500-6 8-4 4 0"/></svg>
<svg style="left:2399.0px;top:164.0px;color:#8f949b;" width="32" height="32" viewBox="0 0 24 24" fill="none" stroke="#8f949b" stroke-width="1.5" stroke-linecap="round" stroke-linejoin="round"><path d="M21.500 2.500c-6 0-10 3-13 9.500l3.500 3.500c6.500-3 9.500-7 9.500-13z"/><path d="M9.500 9.500H5l-2.500 4 4 .5M14.500 14.500V19l-4 2.500-.5-4"/><circle cx="15.500" cy="8.500" r="1.500"/><path d="M6 17c-2 .5-3 2-3 4.500 2.500 0 4-1 4.500-3"/></svg>
<svg style="left:2452.0px;top:164.0px;color:#8f949b;" width="32" height="32" viewBox="0 0 24 24" fill="none" stroke="#8f949b" stroke-width="1.5" stroke-linecap="round" stroke-linejoin="round"><path d="M2.500 3.500h14v9.500H8.500l-3 3v-3h-3z"/><path d="M19.500 9h2v9.500h-2.500v3l-3-3H10v-2.500"/></svg>
<svg style="left:2503.0px;top:164.0px;color:#8f949b;" width="32" height="32" viewBox="0 0 24 24" fill="none" stroke="#8f949b" stroke-width="1.5" stroke-linecap="round" stroke-linejoin="round"><path d="M15 3.500H5.500v17.500h12.500V10"/><path d="M8.500 9.500h6M11.500 6.500v6M8.500 16.500h6"/><path d="M17.500 5a2.500 2.500 0 0 1 4 .5M22 3v2.500h-2.500"/></svg>
<div style="left:2290px;top:211px;width:44px;height:2px;background:#e6edf3;"></div>
<div style="left:712px;top:216px;width:1564px;height:48px;background:#0d1117;"></div>
<div class="t" style="top:221.0px;height:36px;line-height:36px;font-size:26px;color:#a4a7ab;letter-spacing:0.95px;left:744.0px;">flows</div>
<svg style="left:811.0px;top:227.0px;color:#a4a7ab;" width="26" height="26" viewBox="0 0 24 24" fill="none" stroke="#a4a7ab" stroke-width="1.6" stroke-linecap="round" stroke-linejoin="round"><path d="M8.5 5l7 7-7 7"/></svg>
<div class="t" style="top:221.0px;height:36px;line-height:36px;font-size:26px;color:#a4a7ab;letter-spacing:0.78px;left:840.0px;">flow-1</div>
<svg style="left:917.0px;top:227.0px;color:#a4a7ab;" width="26" height="26" viewBox="0 0 24 24" fill="none" stroke="#a4a7ab" stroke-width="1.6" stroke-linecap="round" stroke-linejoin="round"><path d="M8.5 5l7 7-7 7"/></svg>
<svg style="left:953.0px;top:226.0px;color:#a4a7ab;" width="26" height="26" viewBox="0 0 24 24" fill="none" stroke="#a4a7ab" stroke-width="1.5" stroke-linecap="round" stroke-linejoin="round"><rect x="4" y="2.500" width="6.500" height="6.500" rx="1"/><path d="M7.250 9v3.500"/><path d="M7.250 12.500l3.250 3.250-3.250 3.250-3.250-3.250z"/><path d="M10.500 15.750h5"/><rect x="15.500" y="13" width="5.500" height="5.500" rx="1"/></svg>
<div class="t" style="top:221.0px;height:36px;line-height:36px;font-size:26px;color:#a4a7ab;letter-spacing:0.41px;left:989.0px;">flow.oo.yaml</div>
<div style="left:112px;top:2013px;width:2764px;height:43px;background:#212830;"></div>
<div style="left:112px;top:2013px;width:130px;height:43px;background:#7c7ce6;"></div>
<svg style="left:131.0px;top:2019.5px;color:#fff;" width="29" height="29" viewBox="0 0 24 24" fill="none" stroke="#fff" stroke-width="1.5" stroke-linecap="round" stroke-linejoin="round"><path d="M4 11l6.500 5.500L4 22M20 2l-6 5.500 6 5.500"/></svg>
<div class="t" style="top:2017.5px;height:35px;line-height:35px;font-size:25px;color:#fff;letter-spacing:-0.98px;left:167.0px;">OVM</div>
<svg style="left:253.0px;top:2021.0px;color:#cfd3d8;" width="28" height="28" viewBox="0 0 24 24" fill="none" stroke="#cfd3d8" stroke-width="1.5" stroke-linecap="round" stroke-linejoin="round"><circle cx="7" cy="4.500" r="2.400"/><circle cx="7" cy="19.500" r="2.400"/><circle cx="17.500" cy="8" r="2.400"/><path d="M7 7v10M17.500 10.500c0 4.500-10.500 2.500-10.500 6.500"/></svg>
<div class="t" style="top:2017.5px;height:35px;line-height:35px;font-size:25px;color:#cfd3d8;letter-spacing:0.02px;left:289.0px;">main*</div>
<svg style="left:366.0px;top:2021.0px;color:#cfd3d8;" width="28" height="28" viewBox="0 0 24 24" fill="none" stroke="#cfd3d8" stroke-width="1.5" stroke-linecap="round" stroke-linejoin="round"><path d="M3.500 12a8.500 8.500 0 0 1 15-5.500M20.500 12a8.500 8.500 0 0 1-15 5.500"/><path d="M19 2.500v4.500h-4.500M5 21.500v-4.500h4.500"/></svg>
<svg style="left:422.0px;top:2021.5px;color:#cfd3d8;" width="27" height="27" viewBox="0 0 24 24" fill="none" stroke="#cfd3d8" stroke-width="1.5" stroke-linecap="round" stroke-linejoin="round"><circle cx="12" cy="12" r="9.500"/><path d="M8.500 8.500l7 7M15.500 8.500l-7 7"/></svg>
<div class="t" style="top:2017.5px;height:35px;line-height:35px;font-size:25px;color:#cfd3d8;letter-spacing:0.30px;left:457.0px;">0</div>
<svg style="left:479.5px;top:2021.5px;color:#cfd3d8;" width="27" height="27" viewBox="0 0 24 24" fill="none" stroke="#cfd3d8" stroke-width="1.5" stroke-linecap="round" stroke-linejoin="round"><path d="M12 3L2 20.500h20z"/><path d="M12 10v5.500M12 17.700v.200"/></svg>
<div class="t" style="top:2017.5px;height:35px;line-height:35px;font-size:25px;color:#cfd3d8;letter-spacing:0.30px;left:514.0px;">0</div>
<svg style="left:561.0px;top:2021.0px;color:#cfd3d8;" width="28" height="28" viewBox="0 0 24 24" fill="none" stroke="#cfd3d8" stroke-width="1.4" stroke-linecap="round" stroke-linejoin="round"><path d="M12 10l-5 11.500M12 10l5 11.500M9 17.500h6"/><circle cx="12" cy="8.500" r="1.500"/><path d="M7.500 12.500a6 6 0 0 1 0-8M16.500 12.500a6 6 0 0 0 0-8M4.500 15a10 10 0 0 1 0-13M19.500 15a10 10 0 0 0 0-13"/></svg>
<div class="t" style="top:2017.5px;height:35px;line-height:35px;font-size:25px;color:#cfd3d8;letter-spacing:0.30px;left:596.0px;">0</div>
<svg style="left:2757.0px;top:2020.0px" width="30" height="30" viewBox="0 0 24 24" fill="none" stroke="#cfd3d8" stroke-width="1.300" stroke-linecap="round" stroke-linejoin="round"><path d="M6.500 10C4 6 4 1.500 5 1.500S8.500 5 10 9M17.500 10c2.500-4 2.500-8.500 1.500-8.500S15.500 5 14 9" fill="none"/><path d="M3.500 14.500c0-3.500 3.500-6 8.500-6s8.500 2.500 8.500 6v2c0 3.500-3.500 6-8.500 6s-8.500-2.500-8.500-6z" fill="none"/><path d="M3.800 14c2.500-1.200 5.200-1 6.700.200.800.600 2.200.600 3 0 1.500-1.200 4.200-1.400 6.700-.200v3.200c-2 1-4.500.800-6-.400-.900.800-3.500.800-4.400 0-1.500 1.200-4 1.400-6 .400z" fill="#cfd3d8"/><path d="M11 20.500l1 1 1-1" fill="none"/></svg>
<svg style="left:2818.0px;top:2021.0px;color:#cfd3d8;" width="28" height="28" viewBox="0 0 24 24" fill="none" stroke="#cfd3d8" stroke-width="1.5" stroke-linecap="round" stroke-linejoin="round"><path d="M4.500 18.500h15c-2-2-2-4-2-8a5.500 5.500 0 0 0-11 0c0 4 0 6-2 8z"/><path d="M10 18.500a2 2 0 0 0 4 0"/></svg>
<div class="t" style="top:236.0px;height:30px;line-height:30px;font-size:22px;color:#c9d1d9;letter-spacing:-0.85px;left:152.0px;">EXPLORER</div>
<svg style="left:652.0px;top:237.0px;color:#cfd3d8;" width="28" height="28" viewBox="0 0 24 24" fill="#cfd3d8" stroke="none" stroke-linecap="round" stroke-linejoin="round"><circle cx="4.500" cy="12" r="1.600"/><circle cx="12" cy="12" r="1.600"/><circle cx="19.500" cy="12" r="1.600"/></svg>
<svg style="left:117.0px;top:293.0px;color:#c5c8cc;" width="30" height="30" viewBox="0 0 24 24" fill="none" stroke="#c5c8cc" stroke-width="1.5" stroke-linecap="round" stroke-linejoin="round"><path d="M5 8.5l7 7 7-7"/></svg>
<div class="t" style="top:293.0px;height:30px;line-height:30px;font-size:22px;color:#d5dbe2;letter-spacing:0.12px;left:152.0px;font-weight:700;">FLOWS</div>
<div style="left:112px;top:330px;width:598px;height:52px;background:#32305c;border:2px solid #7c7ce6;box-sizing:border-box;"></div>
<svg style="left:141.0px;top:342.0px;color:#e6edf3;" width="28" height="28" viewBox="0 0 24 24" fill="none" stroke="#e6edf3" stroke-width="1.5" stroke-linecap="round" stroke-linejoin="round"><rect x="4" y="2.500" width="6.500" height="6.500" rx="1"/><path d="M7.250 9v3.500"/><path d="M7.250 12.500l3.250 3.250-3.250 3.250-3.250-3.250z"/><path d="M10.500 15.750h5"/><rect x="15.500" y="13" width="5.500" height="5.500" rx="1"/></svg>
<div class="t" style="top:338.0px;height:36px;line-height:36px;font-size:26px;color:#ffffff;letter-spacing:0.78px;left:184.0px;">flow-1</div>
<svg style="left:669.0px;top:342.0px;color:#e6edf3;" width="30" height="30" viewBox="0 0 24 24" fill="none" stroke="#e6edf3" stroke-width="1.6" stroke-linecap="round" stroke-linejoin="round"><path d="M4 6.500h16M9 6.500v-3h6v3M5.500 6.500l1 15h11l1-15"/></svg>
<div style="left:112px;top:861px;width:598px;height:2px;background:#2e2e2e;"></div>
<svg style="left:117.0px;top:870.0px;color:#c5c8cc;" width="30" height="30" viewBox="0 0 24 24" fill="none" stroke="#c5c8cc" stroke-width="1.5" stroke-linecap="round" stroke-linejoin="round"><path d="M5 8.5l7 7 7-7"/></svg>
<div class="t" style="top:870.0px;height:30px;line-height:30px;font-size:22px;color:#d5dbe2;letter-spacing:-0.03px;left:152.0px;font-weight:700;">SHARED BLOCKS</div>
<svg style="left:140.0px;top:917.6px;color:#8f98a3;" width="30" height="30" viewBox="0 0 24 24" stroke-linecap="round" stroke-linejoin="round"><path d="M6.500 1.500h7.500l6 6v13.500a1.500 1.500 0 0 1-1.500 1.500h-12a1.500 1.500 0 0 1-1.500-1.500v-18a1.500 1.500 0 0 1 1.500-1.500z" fill="currentColor" stroke="none"/><path d="M14 1.500v6h6" fill="none" stroke="#161b22" stroke-width="1.600"/><path d="M7 19.500l4-6 2.500 3.500 1.500-2 3 4.500z" fill="#161b22" stroke="none"/><circle cx="9" cy="11.500" r="1.600" fill="#161b22" stroke="none"/></svg>
<div class="t" style="top:914.6px;height:36px;line-height:36px;font-size:26px;color:#8f98a3;letter-spacing:0.19px;left:184.0px;">Blur</div>
<svg style="left:140.0px;top:969.7px;color:#8f98a3;" width="30" height="30" viewBox="0 0 24 24" stroke-linecap="round" stroke-linejoin="round"><path d="M6.500 1.500h7.500l6 6v13.500a1.500 1.500 0 0 1-1.500 1.500h-12a1.500 1.500 0 0 1-1.500-1.500v-18a1.500 1.500 0 0 1 1.500-1.500z" fill="currentColor" stroke="none"/><path d="M14 1.500v6h6" fill="none" stroke="#161b22" stroke-width="1.600"/><path d="M7 19.500l4-6 2.500 3.500 1.500-2 3 4.500z" fill="#161b22" stroke="none"/><circle cx="9" cy="11.500" r="1.600" fill="#161b22" stroke="none"/></svg>
<div class="t" style="top:966.7px;height:36px;line-height:36px;font-size:26px;color:#8f98a3;letter-spacing:0.03px;left:184.0px;">Flip</div>
<svg style="left:140.0px;top:1021.8px;color:#8f98a3;" width="30" height="30" viewBox="0 0 24 24" stroke-linecap="round" stroke-linejoin="round"><path d="M6.500 1.500h7.500l6 6v13.500a1.500 1.500 0 0 1-1.500 1.500h-12a1.500 1.500 0 0 1-1.500-1.500v-18a1.500 1.500 0 0 1 1.500-1.500z" fill="currentColor" stroke="none"/><path d="M14 1.500v6h6" fill="none" stroke="#161b22" stroke-width="1.600"/><path d="M7 19.500l4-6 2.500 3.500 1.500-2 3 4.500z" fill="#161b22" stroke="none"/><circle cx="9" cy="11.500" r="1.600" fill="#161b22" stroke="none"/></svg>
<div class="t" style="top:1018.8px;height:36px;line-height:36px;font-size:26px;color:#8f98a3;letter-spacing:0.11px;left:184.0px;">Flop</div>
<svg style="left:140.5px;top:1074.4px;color:#8f98a3;" width="29" height="29" viewBox="0 0 24 24" fill="none" stroke="#8f98a3" stroke-width="2.7" stroke-linecap="round" stroke-linejoin="round"><path d="M3.500 8.500V4h5M15.500 4h5v4.500M20.500 15.500V20h-5M8.500 20h-5v-4.500"/></svg>
<div class="t" style="top:1070.9px;height:36px;line-height:36px;font-size:26px;color:#8f98a3;letter-spacing:0.18px;left:184.0px;">GreyScale</div>
<svg style="left:140.0px;top:1126.0px;color:#8f98a3;" width="30" height="30" viewBox="0 0 24 24" stroke-linecap="round" stroke-linejoin="round"><path d="M7 1.500h8l6 6v15H7z" fill="currentColor" stroke="none"/><path d="M15 1.500v6h6" fill="none" stroke="#161b22" stroke-width="1.600"/><path d="M1 14.500h13M10.500 10.500l4 4-4 4" fill="none" stroke="#161b22" stroke-width="4.500"/><path d="M1 14.500h13M10.500 10.500l4 4-4 4" fill="none" stroke="currentColor" stroke-width="2"/></svg>
<div class="t" style="top:1123.0px;height:36px;line-height:36px;font-size:26px;color:#8f98a3;letter-spacing:-0.04px;left:184.0px;">ReadImage</div>
<svg style="left:140.5px;top:1178.6px;color:#8f98a3;" width="29" height="29" viewBox="0 0 24 24" fill="none" stroke="#8f98a3" stroke-width="2.7" stroke-linecap="round" stroke-linejoin="round"><path d="M6.500 2v15.500H22M2 6.500h15.500V22"/></svg>
<div class="t" style="top:1175.1px;height:36px;line-height:36px;font-size:26px;color:#8f98a3;letter-spacing:0.07px;left:184.0px;">ResizeImage</div>
<svg style="left:140.5px;top:1230.7px;color:#8f98a3;" width="29" height="29" viewBox="0 0 24 24" fill="none" stroke="#8f98a3" stroke-width="2.7" stroke-linecap="round" stroke-linejoin="round"><path d="M20 11A8.200 8.200 0 0 0 5.500 6.500L3.500 9M4 13a8.200 8.200 0 0 0 14.500 4.500l2-2.500"/><path d="M3.500 4v5h5M20.500 20v-5h-5"/></svg>
<div class="t" style="top:1227.2px;height:36px;line-height:36px;font-size:26px;color:#8f98a3;letter-spacing:0.24px;left:184.0px;">Rotate</div>
<svg style="left:140.5px;top:1282.8px;color:#8f98a3;" width="29" height="29" viewBox="0 0 24 24" fill="none" stroke="#8f98a3" stroke-width="2.7" stroke-linecap="round" stroke-linejoin="round"><circle cx="6" cy="6.500" r="3"/><circle cx="6" cy="17.500" r="3"/><path d="M8.500 8.500L20.500 20M8.500 15.500L20.500 4"/></svg>
<div class="t" style="top:1279.3px;height:36px;line-height:36px;font-size:26px;color:#8f98a3;letter-spacing:0.25px;left:184.0px;">Sharpen</div>
<div style="left:112px;top:1436px;width:598px;height:2px;background:#2e2e2e;"></div>
<svg style="left:117.0px;top:1444.0px;color:#c5c8cc;" width="30" height="30" viewBox="0 0 24 24" fill="none" stroke="#c5c8cc" stroke-width="1.5" stroke-linecap="round" stroke-linejoin="round"><path d="M5 8.5l7 7 7-7"/></svg>
<div class="t" style="top:1444.0px;height:30px;line-height:30px;font-size:22px;color:#d5dbe2;letter-spacing:0.77px;left:152.0px;font-weight:700;">SHARP [OVM]</div>
<div style="left:112px;top:1700px;width:598px;height:44px;background:#32305c;"></div>
<div style="left:168.5px;top:1568px;width:1.5px;height:176px;background:#47443f;"></div>
<svg style="left:143.0px;top:1488.0px;color:#c5c8cc;" width="30" height="30" viewBox="0 0 24 24" fill="none" stroke="#c5c8cc" stroke-width="1.5" stroke-linecap="round" stroke-linejoin="round"><path d="M5 8.5l7 7 7-7"/></svg>
<div class="t" style="top:1485.0px;height:36px;line-height:36px;font-size:26px;color:#8f98a3;letter-spacing:0.75px;left:180.5px;">flows</div>
<svg style="left:159.0px;top:1532.0px;color:#c5c8cc;" width="30" height="30" viewBox="0 0 24 24" fill="none" stroke="#c5c8cc" stroke-width="1.5" stroke-linecap="round" stroke-linejoin="round"><path d="M5 8.5l7 7 7-7"/></svg>
<div class="t" style="top:1529.0px;height:36px;line-height:36px;font-size:26px;color:#8f98a3;letter-spacing:0.78px;left:196.0px;">flow-1</div>
<svg style="left:175.0px;top:1576.0px;color:#c5c8cc;" width="30" height="30" viewBox="0 0 24 24" fill="none" stroke="#c5c8cc" stroke-width="1.5" stroke-linecap="round" stroke-linejoin="round"><path d="M8.5 5l7 7-7 7"/></svg>
<div class="t" style="top:1573.0px;height:36px;line-height:36px;font-size:26px;color:#8f98a3;letter-spacing:0.84px;left:212.0px;">.scriptlets</div>
<svg style="left:175.0px;top:1620.0px;color:#c5c8cc;" width="30" height="30" viewBox="0 0 24 24" fill="none" stroke="#c5c8cc" stroke-width="1.5" stroke-linecap="round" stroke-linejoin="round"><path d="M8.5 5l7 7-7 7"/></svg>
<div class="t" style="top:1617.0px;height:36px;line-height:36px;font-size:26px;color:#8f98a3;letter-spacing:0.89px;left:212.0px;">scriptlets</div>
<svg style="left:175.0px;top:1666.0px;" width="26" height="26" viewBox="0 0 24 24" fill="none" stroke="#8b949e" stroke-width="1.6" stroke-linecap="round" stroke-linejoin="round"><path d="M21 6V4H3v13h7"/><path d="M6.500 8.500h5M6.500 12h3"/><circle cx="19" cy="10" r="2"/><circle cx="14" cy="20" r="2"/><path d="M17 10h-3v8"/></svg>
<div class="t" style="top:1661.0px;height:36px;line-height:36px;font-size:26px;color:#8f98a3;letter-spacing:0.47px;left:212.0px;">.flow.ui.oo.json</div>
<svg style="left:175.0px;top:1710.0px;color:#e6edf3;" width="26" height="26" viewBox="0 0 24 24" fill="none" stroke="#e6edf3" stroke-width="1.5" stroke-linecap="round" stroke-linejoin="round"><rect x="4" y="2.500" width="6.500" height="6.500" rx="1"/><path d="M7.250 9v3.500"/><path d="M7.250 12.500l3.250 3.250-3.250 3.250-3.250-3.250z"/><path d="M10.500 15.750h5"/><rect x="15.500" y="13" width="5.500" height="5.500" rx="1"/></svg>
<div class="t" style="top:1705.0px;height:36px;line-height:36px;font-size:26px;color:#ffffff;letter-spacing:0.29px;left:212.0px;">flow.oo.yaml</div>
<div style="left:160.6px;top:1755px;width:22px;height:23px;background:#4f9ac9;border-radius:1px;"></div>
<div class="t" style="top:1762.0px;height:18px;line-height:18px;font-size:13px;color:#0d1117;letter-spacing:0.00px;left:164.6px;font-weight:700;-webkit-text-stroke:0;">TS</div>
<div class="t" style="top:1749.0px;height:36px;line-height:36px;font-size:26px;color:#8f98a3;letter-spacing:0.81px;left:196.0px;">tsconfig.json</div>
<svg style="left:143.0px;top:1796.0px;color:#c5c8cc;" width="30" height="30" viewBox="0 0 24 24" fill="none" stroke="#c5c8cc" stroke-width="1.5" stroke-linecap="round" stroke-linejoin="round"><path d="M8.5 5l7 7-7 7"/></svg>
<div class="t" style="top:1793.0px;height:36px;line-height:36px;font-size:26px;color:#8f98a3;letter-spacing:0.37px;left:180.5px;">images</div>
<svg style="left:143.0px;top:1840.0px;color:#c5c8cc;" width="30" height="30" viewBox="0 0 24 24" fill="none" stroke="#c5c8cc" stroke-width="1.5" stroke-linecap="round" stroke-linejoin="round"><path d="M8.5 5l7 7-7 7"/></svg>
<div class="t" style="top:1837.0px;height:36px;line-height:36px;font-size:26px;color:#8c8c8c;letter-spacing:0.54px;left:180.5px;">node_modules</div>
<svg style="left:143.0px;top:1884.0px;color:#c5c8cc;" width="30" height="30" viewBox="0 0 24 24" fill="none" stroke="#c5c8cc" stroke-width="1.5" stroke-linecap="round" stroke-linejoin="round"><path d="M8.5 5l7 7-7 7"/></svg>
<div class="t" style="top:1881.0px;height:36px;line-height:36px;font-size:26px;color:#e2c08d;letter-spacing:0.47px;left:180.5px;">tasks</div>
<svg style="left:142.5px;top:1930.0px;" width="26" height="26" viewBox="0 0 24 24" fill="none" stroke="#41535b" stroke-width="0" stroke-linecap="round" stroke-linejoin="round"><path d="M12 1.500L22.500 12 12 22.500 1.500 12z" fill="#41535b" stroke="none"/><path d="M9 7l3.500 3.500v6M12.500 10.500l3 3" stroke="#161b22" stroke-width="1.800" fill="none"/><circle cx="12.500" cy="10.500" r="1.300" fill="#161b22" stroke="none"/><circle cx="12.500" cy="16.500" r="1.300" fill="#161b22" stroke="none"/><circle cx="15.500" cy="13.500" r="1.300" fill="#161b22" stroke="none"/></svg>
<div class="t" style="top:1925.0px;height:36px;line-height:36px;font-size:26px;color:#8f98a3;letter-spacing:0.66px;left:180.5px;">.gitignore</div>
<svg style="left:139.0px;top:1970.0px;" width="32" height="32" viewBox="0 0 24 24" fill="none" stroke="#cbcb41" stroke-width="0" stroke-linecap="round" stroke-linejoin="round"><circle cx="13" cy="3.800" r="2.300" fill="none" stroke="#cbcb41" stroke-width="1.300"/><circle cx="10" cy="8.500" r="3.600" fill="#cbcb41" stroke="none"/><path d="M8.300 11l-3.300 10.500 2.600 1 .800-2.500 1.500.300.600-2.500 1.300-5.800z" fill="#cbcb41" stroke="none"/><circle cx="14.300" cy="9.300" r="3.300" fill="#b9b93a" stroke="none"/><path d="M13.800 12l3.200 9.500 2.300-1-.700-2.300-1.300.200-.600-2.200-.700-4.200z" fill="#b9b93a" stroke="none"/><circle cx="10" cy="7.500" r="1" fill="#161b22" stroke="none"/></svg>
<div class="t" style="top:1969.0px;height:36px;line-height:36px;font-size:26px;color:#8f98a3;letter-spacing:-0.90px;left:180.5px;">LICENSE</div>
<div style="left:659.5px;top:1890px;width:16px;height:16px;background:#7d6b58;border-radius:50%;"></div>
<div class="t" style="top:236.0px;height:30px;line-height:30px;font-size:22px;color:#8b949e;letter-spacing:-0.14px;left:2318.6px;">TOOLBOX</div>
<svg style="left:2816.0px;top:235.0px;color:#cfd3d8;" width="34" height="34" viewBox="0 0 24 24" fill="none" stroke="#cfd3d8" stroke-width="1.4" stroke-linecap="round" stroke-linejoin="round"><path d="M12 21H4.500V2.500h8l5.500 5.500v5"/><path d="M12.500 2.500v5.500h5.500"/><path d="M18 16v6.500M14.750 19.250h6.500"/></svg>
<div style="left:2308px;top:302px;width:538px;height:48px;background:#21262d;border-radius:4px;"></div>
<svg style="left:2318.0px;top:313.0px;color:#e6edf3;" width="26" height="26" viewBox="0 0 24 24" fill="none" stroke="#e6edf3" stroke-width="2.2" stroke-linecap="round" stroke-linejoin="round"><circle cx="10" cy="10" r="6.5"/><path d="M15 15l6 6"/></svg>
<div class="t" style="top:307.5px;height:37px;line-height:37px;font-size:27px;color:#8d96a0;letter-spacing:-0.42px;left:2352.7px;">Search</div>
<div style="left:2301px;top:380px;width:156px;height:150px;background:#32305c;border-radius:8px;"></div>
<svg style="left:2344px;top:398px;" width="70" height="70" viewBox="0 0 70 70"><rect width="70" height="70" rx="16" fill="#fff"/><g transform="translate(11 11)"><path d="M0 6l6-6h18l-6 6z" fill="#a9a9f2"/><path d="M18 6l6-6v18l-6 6z" fill="#55558f"/><rect x="0" y="6" width="18" height="18" fill="#7d7de6"/></g><g transform="translate(35 11)"><path d="M0 6l6-6h18l-6 6z" fill="#a9a9f2"/><path d="M18 6l6-6v18l-6 6z" fill="#55558f"/><rect x="0" y="6" width="18" height="18" fill="#7d7de6"/></g><g transform="translate(11 35)"><path d="M0 6l6-6h18l-6 6z" fill="#a9a9f2"/><path d="M18 6l6-6v18l-6 6z" fill="#55558f"/><rect x="0" y="6" width="18" height="18" fill="#7d7de6"/></g><g transform="translate(35 35)"><path d="M0 6l6-6h18l-6 6z" fill="#a9a9f2"/><path d="M18 6l6-6v18l-6 6z" fill="#55558f"/><rect x="0" y="6" width="18" height="18" fill="#7d7de6"/></g></svg>
<svg style="left:2548px;top:398px;" width="70" height="70" viewBox="0 0 70 70"><rect width="70" height="70" rx="16" fill="#fff"/><path d="M27 22l28 30" stroke="#8b4a6e" stroke-width="8" stroke-linecap="round"/><path d="M12 24l10-10 14 2-4 5 4 5-8 8z" fill="#d9d6e6"/><path d="M12 24l10-10 6 1-12 13z" fill="#b9b5cc"/><path d="M20 50l26-28" stroke="#cfc8e8" stroke-width="7" stroke-linecap="round"/><path d="M46 12a9 9 0 1 0 11 11l-6 1-5-5z" fill="#cfc8e8"/><path d="M24 58a9 9 0 1 0-11-11l6-1 5 5z" fill="#cfc8e8"/></svg>
<svg style="left:2757.5px;top:399px;" width="55" height="68" viewBox="0 0 55 68"><path d="M8 0h27l20 20v42a6 6 0 0 1-6 6H6a6 6 0 0 1-6-6V8a8 8 0 0 1 8-8z" fill="#dfe8ec"/><path d="M35 0l20 20H41a6 6 0 0 1-6-6z" fill="#a9c4cb"/><path d="M16 34h14M16 41h24M16 48h24" stroke="#b7cbd1" stroke-width="3" stroke-linecap="round"/></svg>
<div class="t" style="top:480.5px;height:33px;line-height:33px;font-size:24px;color:#8d96a0;letter-spacing:0.11px;left:2365.8px;">All</div>
<div class="t" style="top:480.5px;height:33px;line-height:33px;font-size:24px;color:#8d96a0;letter-spacing:0.83px;left:2542.0px;">Built-in</div>
<div class="t" style="top:480.5px;height:33px;line-height:33px;font-size:24px;color:#8d96a0;letter-spacing:-0.16px;left:2765.6px;">File</div>
<svg style="left:2344px;top:568px;" width="70" height="70" viewBox="0 0 70 70"><circle cx="35" cy="35" r="33.500" fill="#38366f" stroke="#d7d7df" stroke-width="2.500"/><path d="M47 30H26v-6l-9 8.500 9 0M23 41h21v6l9-8.500-9-8" fill="none"/><path d="M18 29l10-9v6h12a7 7 0 0 1 7 6h-17v6zM52 42l-10 9v-6H30a7 7 0 0 1-7-6h19v-6z" fill="#fff"/></svg>
<svg style="left:2547px;top:568px;" width="70" height="70" viewBox="0 0 70 70"><rect width="70" height="70" rx="15" fill="#fff"/><rect x="14" y="10" width="46" height="34" fill="#a88a5a" stroke="#f2efe8" stroke-width="2" transform="rotate(3 37 27)"/><g transform="rotate(-6 32 38)"><rect x="7" y="18" width="48" height="38" fill="#f4f4f4"/><rect x="10" y="21" width="42" height="32" fill="#7fa6d8"/><path d="M10 38c10-3 20 2 42-4v19H10z" fill="#3d6ea8"/><path d="M10 46c12-4 24 3 42-3v10H10z" fill="#dfe9f2"/><path d="M10 50c8-2 14 1 20 3H10z" fill="#6b5a48"/></g><circle cx="53" cy="42" r="11" fill="#9aa0a8" stroke="#4a4f57" stroke-width="2.500"/><circle cx="53" cy="42" r="7" fill="#c9d6e6"/><path d="M42 46v12a11 4 0 0 0 22 0V46" fill="#5a5046"/><ellipse cx="53" cy="46" rx="11" ry="4" fill="#7a6c5c"/></svg>
<svg style="left:2750px;top:568px;" width="70" height="70" viewBox="0 0 70 70"><rect width="70" height="70" rx="15" fill="#1c1c1f"/><rect x="12" y="23" width="22" height="28" rx="3" fill="#e25c52"/><rect x="38" y="23" width="20" height="28" rx="3" fill="#e25c52"/><path d="M33 12c4 1 7 3 7 8v31c0 5-3 7-7 8M51 12c-4 1-7 3-7 8" fill="none" stroke="#e25c52" stroke-width="2.200" stroke-linecap="round"/><path d="M40 20c0-5 3-7 7-8M40 51c0 5 3 7 7 8" fill="none" stroke="#e25c52" stroke-width="2.200" stroke-linecap="round"/></svg>
<div class="t" style="top:650.5px;height:33px;line-height:33px;font-size:24px;color:#8d96a0;letter-spacing:0.50px;left:2322.7px;">Transform</div>
<div class="t" style="top:650.5px;height:33px;line-height:33px;font-size:24px;color:#8d96a0;letter-spacing:0.23px;left:2538.4px;">Preview</div>
<div class="t" style="top:650.5px;height:33px;line-height:33px;font-size:24px;color:#8d96a0;letter-spacing:-0.12px;left:2725.0px;">AI Rename</div>
<div style="left:2278px;top:730px;width:598px;height:50px;overflow:hidden">
<svg style="left:66px;top:9px" width="70" height="70" viewBox="0 0 70 70"><circle cx="35" cy="35" r="35" fill="#f07427"/><rect x="12" y="12" width="46" height="46" rx="9" fill="#fff"/><rect x="19" y="20" width="32" height="30" fill="#f07427"/><rect x="30" y="10" width="10" height="6" fill="#f07427"/><path d="M31 34h8" stroke="#fff" stroke-width="1.500"/></svg>
<svg style="left:269px;top:9px" width="70" height="70" viewBox="0 0 70 70"><circle cx="35" cy="35" r="34" fill="#fff" stroke="#c9c9c9" stroke-width="1.500"/><circle cx="35" cy="35" r="22" fill="none" stroke="#c9c9c9"/><circle cx="35" cy="35" r="11" fill="none" stroke="#c9c9c9"/><path d="M35 1v68M1 35h68M11 11l48 48M59 11L11 59" stroke="#c9c9c9" stroke-width="1"/><path d="M35 35L18 12l12-5z" fill="#e3b050"/><path d="M35 35L44 14l6 4z" fill="#b5c85a"/><path d="M35 35L9 33l3-9z" fill="#e8d04a"/><path d="M35 35l3-12 4 2z" fill="#6a8fd0"/></svg>
<svg style="left:472px;top:9px" width="70" height="70" viewBox="0 0 70 70"><rect width="70" height="70" rx="15" fill="#fff"/><rect x="11" y="34" width="6" height="30" fill="#e8c13a"/><rect x="22" y="40" width="6" height="24" fill="#e05a4e"/><rect x="33" y="28" width="6" height="36" fill="#6aa84f"/><rect x="44" y="36" width="6" height="28" fill="#e05a4e"/><rect x="55" y="24" width="6" height="40" fill="#6aa84f"/><path d="M14 27l11 6 11-12 11 7 11-12" fill="none" stroke="#555" stroke-width="1.500"/><circle cx="14" cy="27" r="3.500" fill="#e8c13a"/><circle cx="25" cy="33" r="3.500" fill="#e05a4e"/><circle cx="36" cy="21" r="3.500" fill="#6aa84f"/><circle cx="47" cy="28" r="3.500" fill="#e05a4e"/><circle cx="58" cy="16" r="3.500" fill="#6aa84f"/></svg>
</div>
<div style="left:2278px;top:779.5px;width:598px;height:2px;background:#2e2e2e;"></div>
<svg style="left:2288px;top:800.5px;" width="31" height="31" viewBox="0 0 70 70"><rect width="70" height="70" rx="16" fill="#fff"/><g transform="translate(11 11)"><path d="M0 6l6-6h18l-6 6z" fill="#a9a9f2"/><path d="M18 6l6-6v18l-6 6z" fill="#55558f"/><rect x="0" y="6" width="18" height="18" fill="#7d7de6"/></g><g transform="translate(35 11)"><path d="M0 6l6-6h18l-6 6z" fill="#a9a9f2"/><path d="M18 6l6-6v18l-6 6z" fill="#55558f"/><rect x="0" y="6" width="18" height="18" fill="#7d7de6"/></g><g transform="translate(11 35)"><path d="M0 6l6-6h18l-6 6z" fill="#a9a9f2"/><path d="M18 6l6-6v18l-6 6z" fill="#55558f"/><rect x="0" y="6" width="18" height="18" fill="#7d7de6"/></g><g transform="translate(35 35)"><path d="M0 6l6-6h18l-6 6z" fill="#a9a9f2"/><path d="M18 6l6-6v18l-6 6z" fill="#55558f"/><rect x="0" y="6" width="18" height="18" fill="#7d7de6"/></g></svg>
<div class="t" style="top:797.5px;height:37px;line-height:37px;font-size:27px;color:#d5dbe2;letter-spacing:-0.14px;left:2335.7px;font-weight:700;">Installed Shared Blocks</div>
<div style="left:2278px;top:850px;width:598px;height:2px;background:#2e2e2e;"></div>
<svg style="left:2286.6px;top:875.5px;color:#d0d7de;" width="22" height="22" viewBox="0 0 24 24" fill="#d0d7de" stroke="none" stroke-linecap="round" stroke-linejoin="round"><path d="M4 7h16l-8 10z"/></svg>
<svg style="left:2320.5px;top:870px;" width="33.5" height="33.5" viewBox="0 0 70 70"><rect width="70" height="70" rx="16" fill="#fff"/><path d="M27 22l28 30" stroke="#8b4a6e" stroke-width="8" stroke-linecap="round"/><path d="M12 24l10-10 14 2-4 5 4 5-8 8z" fill="#d9d6e6"/><path d="M12 24l10-10 6 1-12 13z" fill="#b9b5cc"/><path d="M20 50l26-28" stroke="#cfc8e8" stroke-width="7" stroke-linecap="round"/><path d="M46 12a9 9 0 1 0 11 11l-6 1-5-5z" fill="#cfc8e8"/><path d="M24 58a9 9 0 1 0-11-11l6-1 5 5z" fill="#cfc8e8"/></svg>
<div class="t" style="top:868.0px;height:37px;line-height:37px;font-size:27px;color:#e6edf3;letter-spacing:0.19px;left:2370.0px;font-weight:700;">Built-in</div>
<svg style="left:2836.0px;top:871.5px;color:#cfd3d8;" width="30" height="30" viewBox="0 0 24 24" fill="none" stroke="#cfd3d8" stroke-width="1.5" stroke-linecap="round" stroke-linejoin="round"><circle cx="12" cy="12" r="9.500"/><path d="M12 11v6"/><circle cx="12" cy="7.500" r=".600" fill="currentColor"/></svg>
<div style="left:2296.5px;top:914.5px;width:1.5px;height:291.5px;background:#3a4048;"></div>
<svg style="left:2336px;top:925.5px;" width="26" height="26" viewBox="0 0 26 26"><path d="M11.500 1c-4 0-5 1.500-5 3.500V8h6v1.200H4C1.500 9.200.500 11 .500 13s1 4 3.500 4H6.500v-3c0-2 1.500-3.500 3.500-3.500h5c1.800 0 3-1.200 3-3V4.500C18 2.500 16 1 11.500 1z" fill="#3e7ab0"/><circle cx="9" cy="4" r="1" fill="#fff"/><path d="M14.500 25c4 0 5-1.500 5-3.500V18h-6v-1.200H22c2.500 0 3.500-1.800 3.500-3.800s-1-4-3.500-4h-2.500v3c0 2-1.500 3.500-3.500 3.500h-5c-1.800 0-3 1.200-3 3v3c0 2 2 3.500 6.500 3.500z" fill="#f7cb3f"/><circle cx="17" cy="22" r="1" fill="#fff"/></svg>
<div class="t" style="top:920.0px;height:37px;line-height:37px;font-size:27px;color:#d0d7de;letter-spacing:0.16px;left:2378.7px;">Python</div>
<div style="left:2336px;top:974.35px;width:26px;height:26px;background:#3178c6;border-radius:5px;"></div>
<div class="t" style="top:981.9px;height:19px;line-height:19px;font-size:14px;color:#fff;letter-spacing:0.00px;left:2340.5px;font-weight:700;-webkit-text-stroke:0;">TS</div>
<div class="t" style="top:968.9px;height:37px;line-height:37px;font-size:27px;color:#d0d7de;letter-spacing:0.24px;left:2378.7px;">TypeScript</div>
<div style="left:2336px;top:1023.2px;width:26px;height:26px;background:#efd94f;border-radius:5px;"></div>
<div class="t" style="top:1030.7px;height:19px;line-height:19px;font-size:14px;color:#2a2a2a;letter-spacing:0.00px;left:2342.5px;font-weight:700;-webkit-text-stroke:0;">JS</div>
<div class="t" style="top:1017.7px;height:37px;line-height:37px;font-size:27px;color:#d0d7de;letter-spacing:-0.00px;left:2378.7px;">JavaScript</div>
<svg style="left:2336px;top:1072.05px;" width="26" height="26" viewBox="0 0 26 26"><rect x="1" y="1" width="24" height="24" rx="5" fill="#fff" stroke="#222" stroke-width="1.500"/><rect x="4" y="4" width="18" height="18" rx="2" fill="none" stroke="#222" stroke-width="1.500"/><rect x="4.500" y="4.500" width="17" height="3.500" fill="#4caf50"/><circle cx="8" cy="12.500" r="1.500" fill="none" stroke="#222" stroke-width="1.200"/><circle cx="8" cy="17.500" r="1.500" fill="none" stroke="#222" stroke-width="1.200"/><path d="M11.500 12.500h7M11.500 17.500h7" stroke="#222" stroke-width="1.800"/></svg>
<div class="t" style="top:1066.5px;height:37px;line-height:37px;font-size:27px;color:#d0d7de;letter-spacing:-0.21px;left:2378.7px;">Value</div>
<svg style="left:2336px;top:1120.8999999999999px;" width="26" height="26" viewBox="0 0 26 26"><rect x=".500" y=".500" width="25" height="25" rx="5" fill="#fff"/><path d="M7 11C5 7 5 2.500 6 2.500S9 6 10.500 9.500M19 11c2-4 2-8.500 1-8.500S17 6 15.500 9.500" fill="#fff" stroke="#222" stroke-width="1.200"/><path d="M3.500 15c0-3.500 3.500-6 9.500-6s9.500 2.500 9.500 6v2c0 3.500-3.500 6-9.500 6s-9.500-2.500-9.500-6z" fill="#fff" stroke="#222" stroke-width="1.200"/><path d="M3.800 14c3-1.200 6-1 7.500.200.800.600 2.600.600 3.400 0 1.500-1.200 4.500-1.400 7.500-.200v3.200c-2.500 1-5 .800-6.500-.400-.900.800-4.500.800-5.400 0-1.500 1.200-4 1.400-6.500.400z" fill="#222"/><path d="M12 20.500l1 1 1-1" fill="none" stroke="#222" stroke-width="1"/></svg>
<div class="t" style="top:1115.4px;height:37px;line-height:37px;font-size:27px;color:#d0d7de;letter-spacing:-0.51px;left:2378.7px;">LLM</div>
<div style="left:2337px;top:1170.7499999999998px;width:24px;height:24px;background:#22272e;border-radius:3px;"></div>
<svg style="left:2337px;top:1170.7499999999998px;" width="24" height="24" viewBox="0 0 24 24"><path d="M6 9l4 3-4 3M12 15.500h5" fill="none" stroke="#4ec9a4" stroke-width="1.800"/></svg>
<div class="t" style="top:1164.2px;height:37px;line-height:37px;font-size:27px;color:#d0d7de;letter-spacing:-0.41px;left:2378.7px;">Shell</div>
<svg style="left:2286.6px;top:1228.0px;color:#d0d7de;" width="22" height="22" viewBox="0 0 24 24" fill="#d0d7de" stroke="none" stroke-linecap="round" stroke-linejoin="round"><path d="M4 7h16l-8 10z"/></svg>
<svg style="left:2323.5px;top:1222.5px;" width="27" height="33.5" viewBox="0 0 55 68"><path d="M8 0h27l20 20v42a6 6 0 0 1-6 6H6a6 6 0 0 1-6-6V8a8 8 0 0 1 8-8z" fill="#dfe8ec"/><path d="M35 0l20 20H41a6 6 0 0 1-6-6z" fill="#a9c4cb"/><path d="M16 34h14M16 41h24M16 48h24" stroke="#b7cbd1" stroke-width="3" stroke-linecap="round"/></svg>
<div class="t" style="top:1220.5px;height:37px;line-height:37px;font-size:27px;color:#e6edf3;letter-spacing:-0.38px;left:2370.0px;font-weight:700;">File</div>
<svg style="left:2836.0px;top:1224.0px;color:#cfd3d8;" width="30" height="30" viewBox="0 0 24 24" fill="none" stroke="#cfd3d8" stroke-width="1.5" stroke-linecap="round" stroke-linejoin="round"><circle cx="12" cy="12" r="9.500"/><path d="M12 11v6"/><circle cx="12" cy="7.500" r=".600" fill="currentColor"/></svg>
<div style="left:2696px;top:1215.5px;width:125.5px;height:47px;background:#21262d;border-radius:8px;"></div>
<div class="t" style="top:1221.5px;height:35px;line-height:35px;font-size:25px;color:#d0d7de;letter-spacing:-0.53px;left:2713.0px;">0.0.7</div>
<svg style="left:2789.0px;top:1227.5px;color:#6e7681;" width="24" height="24" viewBox="0 0 24 24" fill="none" stroke="#6e7681" stroke-width="1.5" stroke-linecap="round" stroke-linejoin="round"><path d="M3.500 7.500l8.500 9.500 8.500-9.500"/></svg>
<div style="left:2296.5px;top:1268px;width:1.5px;height:536px;background:#3a4048;"></div>
<svg style="left:2335.5px;top:1278.5px;color:#e6edf3;" width="27" height="27" viewBox="0 0 24 24" stroke-linecap="round" stroke-linejoin="round"><path d="M3 5a2 2 0 0 1 2-2h11.500L21 7.500V19a2 2 0 0 1-2 2H5a2 2 0 0 1-2-2z" fill="currentColor" stroke="none"/><rect x="6.500" y="6" width="9" height="4" fill="#161b22" stroke="none"/><circle cx="12" cy="15.500" r="2.600" fill="#161b22" stroke="none"/></svg>
<div class="t" style="top:1273.5px;height:37px;line-height:37px;font-size:27px;color:#d0d7de;letter-spacing:-0.16px;left:2378.7px;">Binary save as file</div>
<svg style="left:2335.5px;top:1327.3px;color:#e6edf3;" width="27" height="27" viewBox="0 0 24 24" stroke-linecap="round" stroke-linejoin="round"><path d="M7 1.500h8l6 6v15H7z" fill="currentColor" stroke="none"/><path d="M15 1.500v6h6" fill="none" stroke="#161b22" stroke-width="1.600"/><path d="M1 14.500h13M10.500 10.500l4 4-4 4" fill="none" stroke="#161b22" stroke-width="4.500"/><path d="M1 14.500h13M10.500 10.500l4 4-4 4" fill="none" stroke="currentColor" stroke-width="2"/></svg>
<div class="t" style="top:1322.3px;height:37px;line-height:37px;font-size:27px;color:#d0d7de;letter-spacing:0.14px;left:2378.7px;">Binary to file</div>
<svg style="left:2335.5px;top:1376.2px;color:#e6edf3;" width="27" height="27" viewBox="0 0 24 24" stroke-linecap="round" stroke-linejoin="round"><circle cx="12" cy="12" r="10.500" fill="currentColor" stroke="none"/><path d="M15.500 9.500a4.300 4.300 0 1 0 0 5" fill="none" stroke="#161b22" stroke-width="2.400"/></svg>
<div class="t" style="top:1371.2px;height:37px;line-height:37px;font-size:27px;color:#d0d7de;letter-spacing:0.06px;left:2378.7px;">Copy dir</div>
<svg style="left:2335.5px;top:1425.0px;color:#e6edf3;" width="27" height="27" viewBox="0 0 24 24" stroke-linecap="round" stroke-linejoin="round"><path d="M9 1.500h7l5 5v11H9z" fill="currentColor" stroke="none"/><path d="M6.500 7H3.500v15.500h12v-3" fill="none" stroke="currentColor" stroke-width="2.400"/></svg>
<div class="t" style="top:1420.0px;height:37px;line-height:37px;font-size:27px;color:#d0d7de;letter-spacing:0.11px;left:2378.7px;">Copy file</div>
<svg style="left:2335.5px;top:1473.9px;color:#e6edf3;" width="27" height="27" viewBox="0 0 24 24" stroke-linecap="round" stroke-linejoin="round"><path d="M9 1.500h7l5 5v11H9z" fill="currentColor" stroke="none"/><path d="M6.500 7H3.500v15.500h12v-3" fill="none" stroke="currentColor" stroke-width="2.400"/></svg>
<div class="t" style="top:1468.9px;height:37px;line-height:37px;font-size:27px;color:#d0d7de;letter-spacing:0.18px;left:2378.7px;">Copy flie list</div>
<svg style="left:2335.5px;top:1522.7px;color:#e6edf3;" width="27" height="27" viewBox="0 0 24 24" stroke-linecap="round" stroke-linejoin="round"><path d="M3 2v17.500h8M3 8.500h8" fill="none" stroke="currentColor" stroke-width="2.400"/><path d="M12.500 4h4l1.500 1.500h4v6h-9.500zM12.500 15h4l1.500 1.500h4v6h-9.500z" fill="currentColor" stroke="none"/></svg>
<div class="t" style="top:1517.7px;height:37px;line-height:37px;font-size:27px;color:#d0d7de;letter-spacing:-0.14px;left:2378.7px;">Read folder</div>
<svg style="left:2335.5px;top:1571.6px;color:#e6edf3;" width="27" height="27" viewBox="0 0 24 24" stroke-linecap="round" stroke-linejoin="round"><path d="M3 4.500h18v2.500H3zM8.500 2h7v3h-7z" fill="currentColor" stroke="none"/><path d="M4.500 8.500h15l-1 14h-13z" fill="currentColor" stroke="none"/><path d="M9 11.500v8M12 11.500v8M15 11.500v8" stroke="#161b22" stroke-width="1.500" fill="none"/></svg>
<div class="t" style="top:1566.6px;height:37px;line-height:37px;font-size:27px;color:#d0d7de;letter-spacing:0.11px;left:2378.7px;">Empty dir</div>
<svg style="left:2335.5px;top:1620.4px;color:#e6edf3;" width="27" height="27" viewBox="0 0 24 24" stroke-linecap="round" stroke-linejoin="round"><path d="M2.500 1.500h8l5.500 5.500v15.500h-13.500z" fill="currentColor" stroke="none"/><path d="M10.500 1.500v5.500h5.500" fill="none" stroke="#161b22" stroke-width="1.600"/><path d="M9 15.500h13M18.500 11.500l4 4-4 4" fill="none" stroke="#161b22" stroke-width="4.500"/><path d="M9 15.500h13M18.500 11.500l4 4-4 4" fill="none" stroke="currentColor" stroke-width="2"/></svg>
<div class="t" style="top:1615.4px;height:37px;line-height:37px;font-size:27px;color:#d0d7de;letter-spacing:-0.00px;left:2378.7px;">File to binary</div>
<svg style="left:2335.5px;top:1669.3px;color:#e6edf3;" width="27" height="27" viewBox="0 0 24 24" stroke-linecap="round" stroke-linejoin="round"><path d="M5 1.500h9l6 6v15H5z" fill="currentColor" stroke="none"/><path d="M14 1.500v6h6" fill="none" stroke="#161b22" stroke-width="1.600"/><rect x="3.500" y="11" width="14" height="6.500" rx="1.500" fill="currentColor" stroke="#161b22" stroke-width="1.800"/><path d="M7 14.200h7" stroke="#161b22" stroke-width="1.600" fill="none"/></svg>
<div class="t" style="top:1664.3px;height:37px;line-height:37px;font-size:27px;color:#d0d7de;letter-spacing:0.04px;left:2378.7px;">File to path</div>
<svg style="left:2335.5px;top:1718.1px;color:#e6edf3;" width="27" height="27" viewBox="0 0 24 24" stroke-linecap="round" stroke-linejoin="round"><path d="M6.500 20a5.500 5.500 0 0 1-.800-10.900A7 7 0 0 1 19 10.500a4.800 4.800 0 0 1-1 9.500z" fill="currentColor" stroke="none"/><path d="M12 9.500v7M9 13.500l3 3 3-3" fill="none" stroke="#161b22" stroke-width="2.200"/></svg>
<div class="t" style="top:1713.1px;height:37px;line-height:37px;font-size:27px;color:#d0d7de;letter-spacing:-1.07px;left:2378.7px;">Read URL</div>
<svg style="left:2335.5px;top:1767.0px;color:#e6edf3;" width="27" height="27" viewBox="0 0 24 24" stroke-linecap="round" stroke-linejoin="round"><circle cx="12" cy="12" r="10.500" fill="currentColor" stroke="none"/><path d="M12 6.500v10M7.500 12.500l4.500 4.500 4.500-4.500" fill="none" stroke="#161b22" stroke-width="2.600"/></svg>
<div class="t" style="top:1762.0px;height:37px;line-height:37px;font-size:27px;color:#d0d7de;letter-spacing:-0.05px;left:2378.7px;">URL to path</div>
<svg style="left:2286.6px;top:1825.3px;color:#d0d7de;" width="22" height="22" viewBox="0 0 24 24" fill="#d0d7de" stroke="none" stroke-linecap="round" stroke-linejoin="round"><path d="M4 7h16l-8 10z"/></svg>
<svg style="left:2320.5px;top:1819.5px;" width="33.5" height="33.5" viewBox="0 0 70 70"><circle cx="35" cy="35" r="32.500" fill="#38366f" stroke="#8f8fd8" stroke-width="4"/><path d="M18 29l10-9v6h12a7 7 0 0 1 7 6h-17v6zM52 42l-10 9v-6H30a7 7 0 0 1-7-6h19v-6z" fill="#fff"/></svg>
<div class="t" style="top:1817.8px;height:37px;line-height:37px;font-size:27px;color:#e6edf3;letter-spacing:0.05px;left:2370.0px;font-weight:700;">Transform</div>
<svg style="left:2836.0px;top:1821.3px;color:#cfd3d8;" width="30" height="30" viewBox="0 0 24 24" fill="none" stroke="#cfd3d8" stroke-width="1.5" stroke-linecap="round" stroke-linejoin="round"><circle cx="12" cy="12" r="9.500"/><path d="M12 11v6"/><circle cx="12" cy="7.500" r=".600" fill="currentColor"/></svg>
<div style="left:2696px;top:1812.8px;width:125.5px;height:47px;background:#21262d;border-radius:8px;"></div>
<div class="t" style="top:1818.8px;height:35px;line-height:35px;font-size:25px;color:#d0d7de;letter-spacing:-0.53px;left:2713.0px;">0.0.3</div>
<svg style="left:2789.0px;top:1824.8px;color:#6e7681;" width="24" height="24" viewBox="0 0 24 24" fill="none" stroke="#6e7681" stroke-width="1.5" stroke-linecap="round" stroke-linejoin="round"><path d="M3.500 7.500l8.500 9.500 8.500-9.500"/></svg>
<div style="left:2296.5px;top:1865px;width:1.5px;height:148px;background:#3a4048;"></div>
<svg style="left:2336px;top:1875.7px;" width="26" height="26" viewBox="0 0 70 70"><circle cx="35" cy="35" r="32.500" fill="#38366f" stroke="#8f8fd8" stroke-width="4"/><path d="M18 29l10-9v6h12a7 7 0 0 1 7 6h-17v6zM52 42l-10 9v-6H30a7 7 0 0 1-7-6h19v-6z" fill="#fff"/></svg>
<div class="t" style="top:1870.2px;height:37px;line-height:37px;font-size:27px;color:#d0d7de;letter-spacing:0.19px;left:2378.7px;">Decode string</div>
<svg style="left:2336px;top:1924.55px;" width="26" height="26" viewBox="0 0 70 70"><circle cx="35" cy="35" r="32.500" fill="#38366f" stroke="#8f8fd8" stroke-width="4"/><path d="M18 29l10-9v6h12a7 7 0 0 1 7 6h-17v6zM52 42l-10 9v-6H30a7 7 0 0 1-7-6h19v-6z" fill="#fff"/></svg>
<div class="t" style="top:1919.0px;height:37px;line-height:37px;font-size:27px;color:#d0d7de;letter-spacing:0.07px;left:2378.7px;">Encode string</div>
<svg style="left:2336px;top:1973.3999999999999px;" width="26" height="26" viewBox="0 0 70 70"><circle cx="35" cy="35" r="32.500" fill="#38366f" stroke="#8f8fd8" stroke-width="4"/><path d="M18 29l10-9v6h12a7 7 0 0 1 7 6h-17v6zM52 42l-10 9v-6H30a7 7 0 0 1-7-6h19v-6z" fill="#fff"/></svg>
<div class="t" style="top:1967.9px;height:37px;line-height:37px;font-size:27px;color:#d0d7de;letter-spacing:-0.75px;left:2378.7px;">Parse JSON</div>
<div style="left:712px;top:1411px;width:1564px;height:2px;background:#2e2e2e;"></div>
<div style="left:712px;top:1413px;width:1564px;height:600px;background:#161b22;"></div>
<div class="t" style="top:1433.0px;height:30px;line-height:30px;font-size:22px;color:#9c9fa3;letter-spacing:-0.53px;left:752.5px;">PROBLEMS</div>
<div class="t" style="top:1433.0px;height:30px;line-height:30px;font-size:22px;color:#9c9fa3;letter-spacing:0.18px;left:919.8px;">OUTPUT</div>
<div class="t" style="top:1433.0px;height:30px;line-height:30px;font-size:22px;color:#9c9fa3;letter-spacing:-0.22px;left:1060.5px;">TERMINAL</div>
<div class="t" style="top:1433.0px;height:30px;line-height:30px;font-size:22px;color:#9c9fa3;letter-spacing:-0.58px;left:1219.5px;">PORTS</div>
<div class="t" style="top:1433.0px;height:30px;line-height:30px;font-size:22px;color:#9c9fa3;letter-spacing:-0.45px;left:1341.0px;">CODE DEPS</div>
<div class="t" style="top:1433.0px;height:30px;line-height:30px;font-size:22px;color:#e6edf3;letter-spacing:-0.36px;left:1515.7px;">FLOW LOGS</div>
<div class="t" style="top:1433.0px;height:30px;line-height:30px;font-size:22px;color:#9c9fa3;letter-spacing:-0.53px;left:1692.6px;">LAYER LOGS</div>
<div class="t" style="top:1433.0px;height:30px;line-height:30px;font-size:22px;color:#9c9fa3;letter-spacing:-0.18px;left:1874.5px;">BOOTSTRAP LOGS</div>
<div style="left:1511px;top:1469px;width:137px;height:2.5px;background:#7c7ce6;"></div>
<svg style="left:2164.0px;top:1434.0px;color:#cfd3d8;" width="28" height="28" viewBox="0 0 24 24" fill="none" stroke="#cfd3d8" stroke-width="1.7" stroke-linecap="round" stroke-linejoin="round"><path d="M5 15.5l7-7 7 7"/></svg>
<svg style="left:2217.0px;top:1435.0px;color:#cfd3d8;" width="26" height="26" viewBox="0 0 24 24" fill="none" stroke="#cfd3d8" stroke-width="1.7" stroke-linecap="round" stroke-linejoin="round"><path d="M5 5l14 14M19 5L5 19"/></svg>
<svg style="left:744.0px;top:1502.0px;color:#e6edf3;" width="32" height="32" viewBox="0 0 24 24" fill="none" stroke="#e6edf3" stroke-width="1.6" stroke-linecap="round" stroke-linejoin="round"><path d="M2.500 4h19M10.500 9.300h11M10.500 14.700h11M2.500 20h19"/><path d="M6.500 9L2.800 12l3.700 3z" fill="currentColor"/></svg>
<div style="left:798px;top:1492px;width:1140px;height:52px;background:#21262d;border-radius:8px;"></div>
<div class="t" style="top:1500.0px;height:36px;line-height:36px;font-size:26px;color:#5d6670;letter-spacing:0.48px;left:820.0px;">Filter logs</div>
<svg style="left:1905.5px;top:1506.0px;color:#6e7681;" width="24" height="24" viewBox="0 0 24 24" fill="none" stroke="#6e7681" stroke-width="1.6" stroke-linecap="round" stroke-linejoin="round"><circle cx="10" cy="10" r="6.5"/><path d="M15 15l6 6"/></svg>
<div style="left:1948.5px;top:1494.5px;width:185px;height:47px;background:#21262d;border-radius:8px;"></div>
<svg style="left:1964.7px;top:1506.0px;color:#e6edf3;" width="24" height="24" viewBox="0 0 24 24" fill="none" stroke="#e6edf3" stroke-width="1.5" stroke-linecap="round" stroke-linejoin="round"><path d="M3 4.500h18v12.500h-6.500L12 19.500 9.500 17H3z"/><path d="M7.500 10.700h.01M12 10.700h.01M16.500 10.700h.01" stroke-width="2.200"/></svg>
<div class="t" style="top:1500.0px;height:36px;line-height:36px;font-size:26px;color:#d0d7de;letter-spacing:0.01px;left:1998.7px;">Events</div>
<svg style="left:2100.5px;top:1505.5px;color:#6e7681;" width="26" height="26" viewBox="0 0 24 24" fill="none" stroke="#6e7681" stroke-width="1.5" stroke-linecap="round" stroke-linejoin="round"><path d="M3.500 7.500l8.500 9.500 8.500-9.500"/></svg>
<svg style="left:2155.7px;top:1502.0px;color:#e6edf3;" width="32" height="32" viewBox="0 0 24 24" fill="none" stroke="#e6edf3" stroke-width="1.9" stroke-linecap="round" stroke-linejoin="round"><path d="M9.500 2.500h5v7.500h-5z"/><path d="M4 10h16v4.500H4z"/><path d="M3 21.500l1.500-7h15l1.500 7zM8 21.500v-3.500M12 21.500v-3.500M16 21.500v-3.500"/></svg>
<svg style="left:2211.6px;top:1501.0px;color:#e6edf3;" width="34" height="34" viewBox="0 0 24 24" fill="none" stroke="#e6edf3" stroke-width="1.9" stroke-linecap="round" stroke-linejoin="round"><path d="M13 21H4.500V2.500h8.500l5 5v6"/><path d="M13 2.500v5.500h5"/><path d="M11.500 17.500h10M18.500 14.500l3 3-3 3"/></svg>
<div style="left:712px;top:1554.5px;width:1564px;height:1.5px;background:#2e2e2e;"></div>
<div style="left:1172.5px;top:1556px;width:1.5px;height:457px;background:#2e2e2e;"></div>
<div style="left:712px;top:1556px;width:460px;height:457px;overflow:hidden">
</div>
<svg style="left:722.5px;top:1570.5px;color:#b3b6ba;" width="25" height="25" viewBox="0 0 24 24" stroke-linecap="round" stroke-linejoin="round"><circle cx="12" cy="12" r="10.500" fill="currentColor" stroke="none"/><path d="M12 6.500v10M7.500 12.500l4.500 4.500 4.500-4.500" fill="none" stroke="#161b22" stroke-width="2.600"/></svg>
<div class="t" style="top:1565.0px;height:36px;line-height:36px;font-size:26px;color:#cfd1d4;letter-spacing:0.37px;left:760.0px;">URL to path #1</div>
<svg style="left:722.5px;top:1622.9px;color:#b3b6ba;" width="25" height="25" viewBox="0 0 24 24" stroke-linecap="round" stroke-linejoin="round"><path d="M7 1.500h8l6 6v15H7z" fill="currentColor" stroke="none"/><path d="M15 1.500v6h6" fill="none" stroke="#161b22" stroke-width="1.600"/><path d="M1 14.500h13M10.500 10.500l4 4-4 4" fill="none" stroke="#161b22" stroke-width="4.500"/><path d="M1 14.500h13M10.500 10.500l4 4-4 4" fill="none" stroke="currentColor" stroke-width="2"/></svg>
<div class="t" style="top:1617.4px;height:36px;line-height:36px;font-size:26px;color:#cfd1d4;letter-spacing:0.00px;left:760.0px;">ReadImage #1</div>
<svg style="left:722.5px;top:1675.3px;color:#b3b6ba;" width="25" height="25" viewBox="0 0 24 24" fill="none" stroke="#b3b6ba" stroke-width="2.6" stroke-linecap="round" stroke-linejoin="round"><path d="M6.500 2v15.500H22M2 6.500h15.500V22"/></svg>
<div class="t" style="top:1669.8px;height:36px;line-height:36px;font-size:26px;color:#cfd1d4;letter-spacing:0.05px;left:760.0px;">ResizeImage #1</div>
<svg style="left:722.5px;top:1727.7px;color:#b3b6ba;" width="25" height="25" viewBox="0 0 24 24" fill="none" stroke="#b3b6ba" stroke-width="2.6" stroke-linecap="round" stroke-linejoin="round"><path d="M20 11A8.200 8.200 0 0 0 5.500 6.500L3.500 9M4 13a8.200 8.200 0 0 0 14.500 4.500l2-2.500"/><path d="M3.500 4v5h5M20.500 20v-5h-5"/></svg>
<div class="t" style="top:1722.2px;height:36px;line-height:36px;font-size:26px;color:#cfd1d4;letter-spacing:0.14px;left:760.0px;">Rotate #1</div>
<svg style="left:722.5px;top:1780.1px;color:#b3b6ba;" width="25" height="25" viewBox="0 0 24 24" fill="none" stroke="#b3b6ba" stroke-width="2.6" stroke-linecap="round" stroke-linejoin="round"><circle cx="6" cy="6.500" r="3"/><circle cx="6" cy="17.500" r="3"/><path d="M8.500 8.500L20.500 20M8.500 15.500L20.500 4"/></svg>
<div class="t" style="top:1774.6px;height:36px;line-height:36px;font-size:26px;color:#cfd1d4;letter-spacing:0.20px;left:760.0px;">Sharpen#1</div>
<svg style="left:722.5px;top:1832.5px;color:#b3b6ba;" width="25" height="25" viewBox="0 0 24 24" stroke-linecap="round" stroke-linejoin="round"><path d="M6.500 1.500h7.500l6 6v13.500a1.500 1.500 0 0 1-1.500 1.500h-12a1.500 1.500 0 0 1-1.500-1.500v-18a1.500 1.500 0 0 1 1.500-1.500z" fill="currentColor" stroke="none"/><path d="M14 1.500v6h6" fill="none" stroke="#161b22" stroke-width="1.600"/><path d="M7 19.500l4-6 2.500 3.500 1.500-2 3 4.500z" fill="#161b22" stroke="none"/><circle cx="9" cy="11.500" r="1.600" fill="#161b22" stroke="none"/></svg>
<div class="t" style="top:1827.0px;height:36px;line-height:36px;font-size:26px;color:#cfd1d4;letter-spacing:0.09px;left:760.0px;">Blur #1</div>
<svg style="left:722.5px;top:1884.9px;color:#b3b6ba;" width="25" height="25" viewBox="0 0 24 24" fill="none" stroke="#b3b6ba" stroke-width="2.6" stroke-linecap="round" stroke-linejoin="round"><path d="M3.500 8.500V4h5M15.500 4h5v4.500M20.500 15.500V20h-5M8.500 20h-5v-4.500"/></svg>
<div class="t" style="top:1879.4px;height:36px;line-height:36px;font-size:26px;color:#cfd1d4;letter-spacing:0.11px;left:760.0px;">GreyScale#1</div>
<svg style="left:722.5px;top:1937.3px;color:#b3b6ba;" width="25" height="25" viewBox="0 0 24 24" stroke-linecap="round" stroke-linejoin="round"><path d="M6.500 1.500h7.500l6 6v13.500a1.500 1.500 0 0 1-1.500 1.500h-12a1.500 1.500 0 0 1-1.500-1.500v-18a1.500 1.500 0 0 1 1.500-1.500z" fill="currentColor" stroke="none"/><path d="M14 1.500v6h6" fill="none" stroke="#161b22" stroke-width="1.600"/><path d="M7 19.500l4-6 2.500 3.500 1.500-2 3 4.500z" fill="#161b22" stroke="none"/><circle cx="9" cy="11.500" r="1.600" fill="#161b22" stroke="none"/></svg>
<div class="t" style="top:1931.8px;height:36px;line-height:36px;font-size:26px;color:#cfd1d4;letter-spacing:-0.07px;left:760.0px;">Flip #1</div>
<svg style="left:722.5px;top:1989.7px;color:#b3b6ba;" width="25" height="25" viewBox="0 0 24 24" stroke-linecap="round" stroke-linejoin="round"><path d="M6.500 1.500h7.500l6 6v13.500a1.500 1.500 0 0 1-1.500 1.500h-12a1.500 1.500 0 0 1-1.500-1.500v-18a1.500 1.500 0 0 1 1.500-1.500z" fill="currentColor" stroke="none"/><path d="M14 1.500v6h6" fill="none" stroke="#161b22" stroke-width="1.600"/><path d="M7 19.500l4-6 2.500 3.500 1.500-2 3 4.500z" fill="#161b22" stroke="none"/><circle cx="9" cy="11.500" r="1.600" fill="#161b22" stroke="none"/></svg>
<div class="t" style="top:1984.2px;height:36px;line-height:36px;font-size:26px;color:#cfd1d4;letter-spacing:-0.03px;left:760.0px;">Flop #1</div>
<div style="left:1174px;top:1660.8px;width:1102px;height:1.6px;background:#2e2e2e;"></div>
<div style="left:1174px;top:1722.6000000000001px;width:1102px;height:1.6px;background:#2e2e2e;"></div>
<div style="left:1174px;top:1831.0px;width:1102px;height:1.6px;background:#2e2e2e;"></div>
<div style="left:1174px;top:1892.0px;width:1102px;height:1.6px;background:#2e2e2e;"></div>
<div style="left:1174px;top:1950.7px;width:1102px;height:1.6px;background:#2e2e2e;"></div>
<svg style="left:1184.2px;top:1573.5px;color:#e6edf3;" width="25" height="25" viewBox="0 0 24 24" fill="none" stroke="#e6edf3" stroke-width="1.5" stroke-linecap="round" stroke-linejoin="round"><path d="M5.500 5.500A9 9 0 1 1 3.200 10"/><path d="M5.500 2v4h4"/></svg>
<svg style="left:1238.5px;top:1574.5px;color:#c3c7cc;" width="25" height="25" viewBox="0 0 24 24" stroke-linecap="round" stroke-linejoin="round"><path d="M6.500 1.500h7.500l6 6v13.500a1.500 1.500 0 0 1-1.500 1.500h-12a1.500 1.500 0 0 1-1.500-1.500v-18a1.500 1.500 0 0 1 1.500-1.500z" fill="currentColor" stroke="none"/><path d="M14 1.500v6h6" fill="none" stroke="#161b22" stroke-width="1.600"/><path d="M7 19.500l4-6 2.500 3.500 1.500-2 3 4.500z" fill="#161b22" stroke="none"/><circle cx="9" cy="11.500" r="1.600" fill="#161b22" stroke="none"/></svg>
<div class="t" style="top:1567.0px;height:36px;line-height:36px;font-size:26px;color:#e6edf3;letter-spacing:-0.10px;left:1276.0px;">Flop #1</div>
<div class="t" style="top:1571.0px;height:30px;line-height:30px;font-size:22px;color:#6e7681;letter-spacing:-0.87px;left:1375.0px;font-family:'Liberation Mono',monospace;">Flop#1</div>
<div class="t" style="top:1564.5px;height:39px;line-height:39px;font-size:28px;color:#c9d1d9;letter-spacing:0.42px;left:1460.0px;">»</div>
<div class="t" style="top:1567.0px;height:36px;line-height:36px;font-size:26px;color:#e6edf3;letter-spacing:0.77px;left:1488.0px;">started at</div>
<div class="t" style="top:1569.5px;height:33px;line-height:33px;font-size:24px;color:#8b949e;letter-spacing:0.43px;left:1617.5px;">2025/3/13 16:32:25</div>
<svg style="left:1184.2px;top:1681.9px;color:#56b35a;" width="25" height="25" viewBox="0 0 24 24" fill="none" stroke="#56b35a" stroke-width="1.9" stroke-linecap="round" stroke-linejoin="round"><path d="M21 11a9 9 0 1 1-4.500-6.800"/><path d="M8 11l4 4.500L21.500 5"/></svg>
<svg style="left:1238.5px;top:1682.9px;color:#c3c7cc;" width="25" height="25" viewBox="0 0 24 24" stroke-linecap="round" stroke-linejoin="round"><path d="M6.500 1.500h7.500l6 6v13.500a1.500 1.500 0 0 1-1.500 1.500h-12a1.500 1.500 0 0 1-1.500-1.500v-18a1.500 1.500 0 0 1 1.500-1.500z" fill="currentColor" stroke="none"/><path d="M14 1.500v6h6" fill="none" stroke="#161b22" stroke-width="1.600"/><path d="M7 19.500l4-6 2.500 3.500 1.500-2 3 4.500z" fill="#161b22" stroke="none"/><circle cx="9" cy="11.500" r="1.600" fill="#161b22" stroke="none"/></svg>
<div class="t" style="top:1675.4px;height:36px;line-height:36px;font-size:26px;color:#e6edf3;letter-spacing:-0.15px;left:1276.0px;">Flip #1</div>
<div class="t" style="top:1679.4px;height:30px;line-height:30px;font-size:22px;color:#6e7681;letter-spacing:-0.87px;left:1366.0px;font-family:'Liberation Mono',monospace;">Flip#1</div>
<div class="t" style="top:1672.9px;height:39px;line-height:39px;font-size:28px;color:#c9d1d9;letter-spacing:0.42px;left:1451.0px;">»</div>
<div class="t" style="top:1675.4px;height:36px;line-height:36px;font-size:26px;color:#e6edf3;letter-spacing:0.68px;left:1479.0px;">finished at</div>
<div class="t" style="top:1677.9px;height:33px;line-height:33px;font-size:24px;color:#8b949e;letter-spacing:0.43px;left:1625.0px;">2025/3/13 16:32:25</div>
<svg style="left:1185.0px;top:1743.5px;color:#e6edf3;" width="25" height="25" viewBox="0 0 24 24" fill="none" stroke="#e6edf3" stroke-width="1.4" stroke-linecap="round" stroke-linejoin="round"><circle cx="11" cy="12" r="8.500"/><path d="M9.500 12H22.500M19 8.500l3.500 3.500-3.500 3.500"/></svg>
<svg style="left:1238.5px;top:1744.5px;color:#c3c7cc;" width="25" height="25" viewBox="0 0 24 24" stroke-linecap="round" stroke-linejoin="round"><path d="M6.500 1.500h7.500l6 6v13.500a1.500 1.500 0 0 1-1.500 1.500h-12a1.500 1.500 0 0 1-1.500-1.500v-18a1.500 1.500 0 0 1 1.500-1.500z" fill="currentColor" stroke="none"/><path d="M14 1.500v6h6" fill="none" stroke="#161b22" stroke-width="1.600"/><path d="M7 19.500l4-6 2.500 3.500 1.500-2 3 4.500z" fill="#161b22" stroke="none"/><circle cx="9" cy="11.500" r="1.600" fill="#161b22" stroke="none"/></svg>
<div class="t" style="top:1737.0px;height:36px;line-height:36px;font-size:26px;color:#e6edf3;letter-spacing:-0.10px;left:1276.0px;">Flop #1</div>
<div class="t" style="top:1741.0px;height:30px;line-height:30px;font-size:22px;color:#6e7681;letter-spacing:-0.87px;left:1375.0px;font-family:'Liberation Mono',monospace;">Flop#1</div>
<div class="t" style="top:1734.5px;height:39px;line-height:39px;font-size:28px;color:#c9d1d9;letter-spacing:0.42px;left:1460.0px;">»</div>
<div class="t" style="top:1737.0px;height:36px;line-height:36px;font-size:26px;color:#e6edf3;letter-spacing:0.75px;left:1488.0px;">output from handle</div>
<div class="t" style="top:1737.5px;height:35px;line-height:35px;font-size:25.5px;color:#79c0ff;letter-spacing:0.02px;left:1727.3px;font-family:'Liberation Mono',monospace;">sharp</div>
<div class="t" style="top:1737.0px;height:36px;line-height:36px;font-size:26px;color:#e6edf3;letter-spacing:0.30px;left:1812.9px;">:</div>
<svg style="left:1184.2px;top:1851.2px;color:#56b35a;" width="25" height="25" viewBox="0 0 24 24" fill="none" stroke="#56b35a" stroke-width="1.9" stroke-linecap="round" stroke-linejoin="round"><path d="M21 11a9 9 0 1 1-4.500-6.800"/><path d="M8 11l4 4.500L21.500 5"/></svg>
<svg style="left:1238.5px;top:1852.2px;color:#c3c7cc;" width="25" height="25" viewBox="0 0 24 24" stroke-linecap="round" stroke-linejoin="round"><path d="M6.500 1.500h7.500l6 6v13.500a1.500 1.500 0 0 1-1.500 1.500h-12a1.500 1.500 0 0 1-1.500-1.500v-18a1.500 1.500 0 0 1 1.500-1.500z" fill="currentColor" stroke="none"/><path d="M14 1.500v6h6" fill="none" stroke="#161b22" stroke-width="1.600"/><path d="M7 19.500l4-6 2.500 3.500 1.500-2 3 4.500z" fill="#161b22" stroke="none"/><circle cx="9" cy="11.500" r="1.600" fill="#161b22" stroke="none"/></svg>
<div class="t" style="top:1844.7px;height:36px;line-height:36px;font-size:26px;color:#e6edf3;letter-spacing:-0.10px;left:1276.0px;">Flop #1</div>
<div class="t" style="top:1848.7px;height:30px;line-height:30px;font-size:22px;color:#6e7681;letter-spacing:-0.87px;left:1375.0px;font-family:'Liberation Mono',monospace;">Flop#1</div>
<div class="t" style="top:1842.2px;height:39px;line-height:39px;font-size:28px;color:#c9d1d9;letter-spacing:0.42px;left:1460.0px;">»</div>
<div class="t" style="top:1844.7px;height:36px;line-height:36px;font-size:26px;color:#e6edf3;letter-spacing:0.64px;left:1488.0px;">finished at</div>
<div class="t" style="top:1847.2px;height:33px;line-height:33px;font-size:24px;color:#8b949e;letter-spacing:0.43px;left:1633.5px;">2025/3/13 16:32:25</div>
<svg style="left:1184.2px;top:1912.2px;color:#56b35a;" width="25" height="25" viewBox="0 0 24 24" fill="none" stroke="#56b35a" stroke-width="1.9" stroke-linecap="round" stroke-linejoin="round"><path d="M21 11a9 9 0 1 1-4.500-6.800"/><path d="M8 11l4 4.500L21.500 5"/></svg>
<svg style="left:1240.0px;top:1914.2px;color:#c9d1d9;" width="23" height="23" viewBox="0 0 24 24" fill="none" stroke="#c9d1d9" stroke-width="1.5" stroke-linecap="round" stroke-linejoin="round"><rect x="4" y="2.500" width="6.500" height="6.500" rx="1"/><path d="M7.250 9v3.500"/><path d="M7.250 12.500l3.250 3.250-3.250 3.250-3.250-3.250z"/><path d="M10.500 15.750h5"/><rect x="15.500" y="13" width="5.500" height="5.500" rx="1"/></svg>
<div class="t" style="top:1905.7px;height:36px;line-height:36px;font-size:26px;color:#e6edf3;letter-spacing:0.69px;left:1276.0px;">flow-1</div>
<div class="t" style="top:1903.2px;height:39px;line-height:39px;font-size:28px;color:#c9d1d9;letter-spacing:0.42px;left:1360.5px;">»</div>
<div class="t" style="top:1905.7px;height:36px;line-height:36px;font-size:26px;color:#e6edf3;letter-spacing:0.64px;left:1388.5px;">finished at</div>
<div class="t" style="top:1908.2px;height:33px;line-height:33px;font-size:24px;color:#8b949e;letter-spacing:0.43px;left:1534.0px;">2025/3/13 16:32:25</div>
<svg style="left:1184.2px;top:1971.3px;color:#56b35a;" width="25" height="25" viewBox="0 0 24 24" fill="none" stroke="#56b35a" stroke-width="1.9" stroke-linecap="round" stroke-linejoin="round"><path d="M21 11a9 9 0 1 1-4.500-6.800"/><path d="M8 11l4 4.500L21.500 5"/></svg>
<svg style="left:1239.5px;top:1973.3px;color:#c9d1d9;" width="23" height="23" viewBox="0 0 24 24" fill="none" stroke="#c9d1d9" stroke-width="1.5" stroke-linecap="round" stroke-linejoin="round"><rect x="3" y="4.500" width="18" height="15" rx="1"/><path d="M6.500 9h8M6.500 12.500h5"/></svg>
<div class="t" style="top:1964.8px;height:36px;line-height:36px;font-size:26px;color:#e6edf3;letter-spacing:0.03px;left:1276.0px;">Session</div>
<div class="t" style="top:1968.8px;height:30px;line-height:30px;font-size:22px;color:#6e7681;letter-spacing:-0.77px;left:1381.7px;font-family:'Liberation Mono',monospace;">473ad2bc</div>
<div class="t" style="top:1962.3px;height:39px;line-height:39px;font-size:28px;color:#c9d1d9;letter-spacing:0.42px;left:1492.2px;">»</div>
<div class="t" style="top:1964.8px;height:36px;line-height:36px;font-size:26px;color:#e6edf3;letter-spacing:0.64px;left:1520.2px;">finished at</div>
<div class="t" style="top:1967.3px;height:33px;line-height:33px;font-size:24px;color:#8b949e;letter-spacing:0.43px;left:1665.7px;">2025/3/13 16:32:25</div>
<div style="left:1250.5px;top:1616px;width:1.5px;height:26px;background:#3a4048;"></div>
<svg style="left:1283px;top:1628px" width="12" height="12" viewBox="0 0 12 12"><path d="M1 1l10 5-10 5z" fill="#e6edf3"/></svg>
<div class="t" style="top:1618.5px;height:29px;line-height:29px;font-size:21px;color:#e6edf3;letter-spacing:0.10px;left:1308.0px;font-weight:700;font-family:'Liberation Mono',monospace;">{ ... }</div>
<div style="left:1250.5px;top:1784px;width:1.5px;height:26px;background:#3a4048;"></div>
<svg style="left:1283px;top:1796px" width="12" height="12" viewBox="0 0 12 12"><path d="M1 1l10 5-10 5z" fill="#e6edf3"/></svg>
<div class="t" style="top:1786.5px;height:29px;line-height:29px;font-size:21px;color:#e6edf3;letter-spacing:0.10px;left:1308.0px;font-weight:700;font-family:'Liberation Mono',monospace;">{ ... }</div>
<svg style="left:2240.5px;top:1566.2px;color:#7d858f;" width="25" height="25" viewBox="0 0 24 24" fill="none" stroke="#7d858f" stroke-width="1.3" stroke-linecap="round" stroke-linejoin="round"><path d="M3 4.500h18v12.500h-6.500L12 19.500 9.500 17H3z"/><path d="M7.500 10.700h.01M12 10.700h.01M16.500 10.700h.01" stroke-width="2.200"/></svg>
<svg style="left:2240.5px;top:1674.0px;color:#7d858f;" width="25" height="25" viewBox="0 0 24 24" fill="none" stroke="#7d858f" stroke-width="1.3" stroke-linecap="round" stroke-linejoin="round"><path d="M3 4.500h18v12.500h-6.500L12 19.500 9.500 17H3z"/><path d="M7.500 10.700h.01M12 10.700h.01M16.500 10.700h.01" stroke-width="2.200"/></svg>
<svg style="left:2240.5px;top:1736.0px;color:#7d858f;" width="25" height="25" viewBox="0 0 24 24" fill="none" stroke="#7d858f" stroke-width="1.3" stroke-linecap="round" stroke-linejoin="round"><path d="M3 4.500h18v12.500h-6.500L12 19.500 9.500 17H3z"/><path d="M7.500 10.700h.01M12 10.700h.01M16.500 10.700h.01" stroke-width="2.200"/></svg>
<svg style="left:2240.5px;top:1844.0px;color:#7d858f;" width="25" height="25" viewBox="0 0 24 24" fill="none" stroke="#7d858f" stroke-width="1.3" stroke-linecap="round" stroke-linejoin="round"><path d="M3 4.500h18v12.500h-6.500L12 19.500 9.500 17H3z"/><path d="M7.500 10.700h.01M12 10.700h.01M16.500 10.700h.01" stroke-width="2.200"/></svg>
<svg style="left:2240.5px;top:1905.0px;color:#7d858f;" width="25" height="25" viewBox="0 0 24 24" fill="none" stroke="#7d858f" stroke-width="1.3" stroke-linecap="round" stroke-linejoin="round"><path d="M3 4.500h18v12.500h-6.500L12 19.500 9.500 17H3z"/><path d="M7.500 10.700h.01M12 10.700h.01M16.500 10.700h.01" stroke-width="2.200"/></svg>
<svg style="left:2240.5px;top:1963.5px;color:#7d858f;" width="25" height="25" viewBox="0 0 24 24" fill="none" stroke="#7d858f" stroke-width="1.3" stroke-linecap="round" stroke-linejoin="round"><path d="M3 4.500h18v12.500h-6.500L12 19.500 9.500 17H3z"/><path d="M7.500 10.700h.01M12 10.700h.01M16.500 10.700h.01" stroke-width="2.200"/></svg>
</div></div><div id="rim"></div></body></html>
